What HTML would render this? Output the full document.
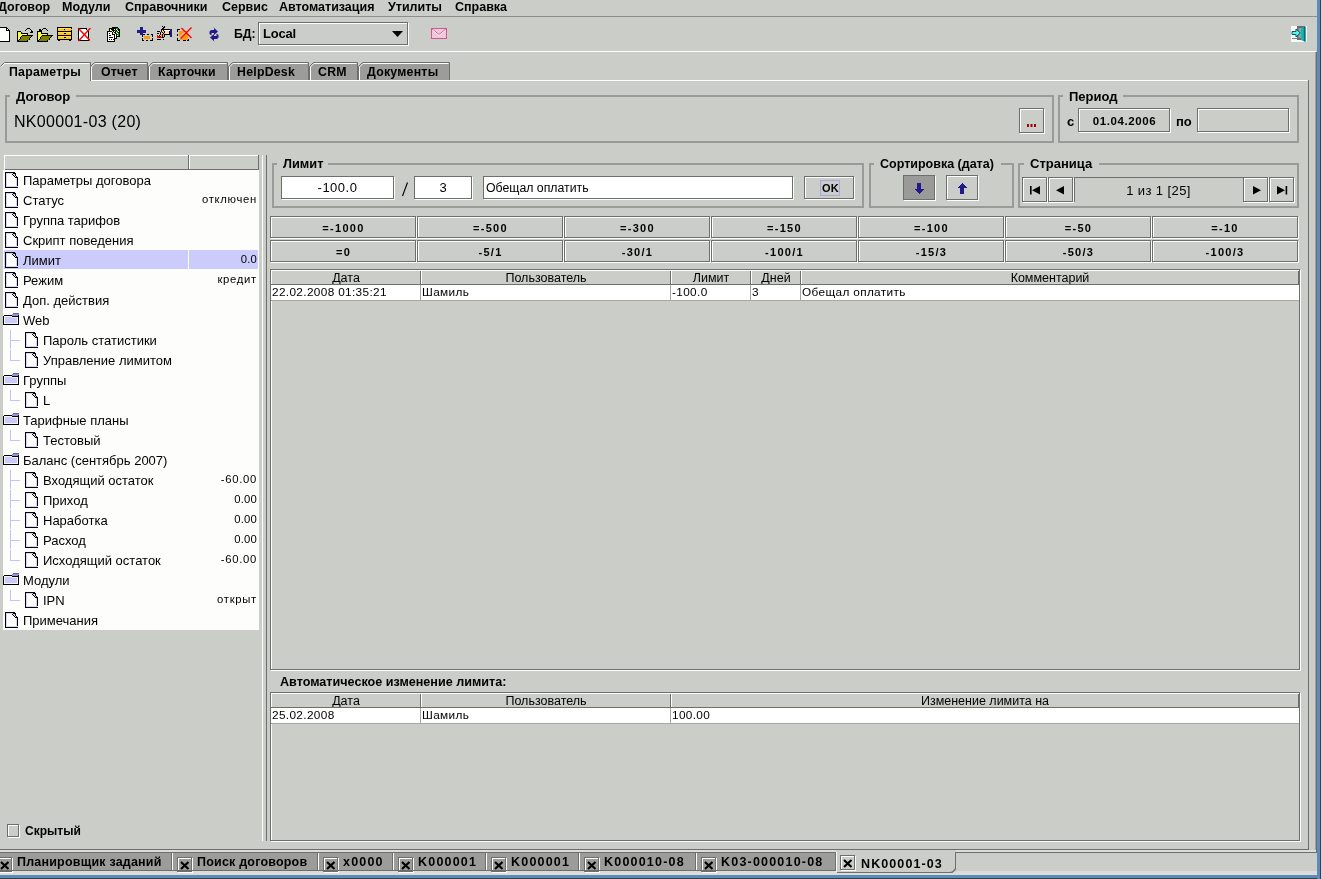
<!DOCTYPE html>
<html><head><meta charset="utf-8"><style>
html,body{margin:0;padding:0}
body{width:1321px;height:879px;overflow:hidden;position:relative;background:#cacdc8;font-family:"Liberation Sans",sans-serif}
#root{position:absolute;left:0;top:0;width:1321px;height:879px;overflow:hidden;will-change:transform}
#root>div,#root>svg{position:absolute}
.t{white-space:nowrap;line-height:20px}
</style></head><body><div id="root">
<div class="t" style="left:-2px;top:-3px;font-size:12.5px;font-weight:700;color:#000;">Договор</div>
<div class="t" style="left:62px;top:-3px;font-size:12.5px;font-weight:700;color:#000;">Модули</div>
<div class="t" style="left:125px;top:-3px;font-size:12.5px;font-weight:700;color:#000;">Справочники</div>
<div class="t" style="left:222px;top:-3px;font-size:12.5px;font-weight:700;color:#000;">Сервис</div>
<div class="t" style="left:279px;top:-3px;font-size:12.5px;font-weight:700;color:#000;">Автоматизация</div>
<div class="t" style="left:388px;top:-3px;font-size:12.5px;font-weight:700;color:#000;">Утилиты</div>
<div class="t" style="left:455px;top:-3px;font-size:12.5px;font-weight:700;color:#000;">Справка</div>
<div style="left:0px;top:16px;width:1317px;height:1px;background:#8e8f8c"></div>
<svg style="left:0px;top:27px" width="10" height="15" viewBox="0 0 10 15" shape-rendering="crispEdges"><rect x="0" y="0" width="7" height="1" fill="#000000"/><rect x="0" y="1" width="6" height="1" fill="#fdfdfb"/><rect x="6" y="1" width="2" height="1" fill="#000000"/><rect x="0" y="2" width="6" height="1" fill="#fdfdfb"/><rect x="6" y="2" width="1" height="1" fill="#000000"/><rect x="7" y="2" width="1" height="1" fill="#fdfdfb"/><rect x="8" y="2" width="1" height="1" fill="#000000"/><rect x="0" y="3" width="6" height="1" fill="#fdfdfb"/><rect x="6" y="3" width="4" height="1" fill="#000000"/><rect x="0" y="4" width="9" height="1" fill="#fdfdfb"/><rect x="9" y="4" width="1" height="1" fill="#000000"/><rect x="0" y="5" width="9" height="1" fill="#fdfdfb"/><rect x="9" y="5" width="1" height="1" fill="#000000"/><rect x="0" y="6" width="9" height="1" fill="#fdfdfb"/><rect x="9" y="6" width="1" height="1" fill="#000000"/><rect x="0" y="7" width="9" height="1" fill="#fdfdfb"/><rect x="9" y="7" width="1" height="1" fill="#000000"/><rect x="0" y="8" width="9" height="1" fill="#fdfdfb"/><rect x="9" y="8" width="1" height="1" fill="#000000"/><rect x="0" y="9" width="9" height="1" fill="#fdfdfb"/><rect x="9" y="9" width="1" height="1" fill="#000000"/><rect x="0" y="10" width="9" height="1" fill="#fdfdfb"/><rect x="9" y="10" width="1" height="1" fill="#000000"/><rect x="0" y="11" width="9" height="1" fill="#fdfdfb"/><rect x="9" y="11" width="1" height="1" fill="#000000"/><rect x="0" y="12" width="9" height="1" fill="#fdfdfb"/><rect x="9" y="12" width="1" height="1" fill="#000000"/><rect x="0" y="13" width="9" height="1" fill="#fdfdfb"/><rect x="9" y="13" width="1" height="1" fill="#000000"/><rect x="0" y="14" width="10" height="1" fill="#000000"/></svg>
<svg style="left:17px;top:28px" width="16" height="14" viewBox="0 0 16 14" shape-rendering="crispEdges"><rect x="10" y="0" width="3" height="1" fill="#000000"/><rect x="9" y="1" width="1" height="1" fill="#000000"/><rect x="13" y="1" width="1" height="1" fill="#000000"/><rect x="8" y="2" width="1" height="1" fill="#000000"/><rect x="14" y="2" width="1" height="1" fill="#000000"/><rect x="0" y="3" width="4" height="1" fill="#000000"/><rect x="14" y="3" width="2" height="1" fill="#000000"/><rect x="0" y="4" width="1" height="1" fill="#000000"/><rect x="1" y="4" width="3" height="1" fill="#ffff00"/><rect x="4" y="4" width="1" height="1" fill="#000000"/><rect x="13" y="4" width="3" height="1" fill="#000000"/><rect x="0" y="5" width="1" height="1" fill="#000000"/><rect x="1" y="5" width="1" height="1" fill="#ffff00"/><rect x="2" y="5" width="1" height="1" fill="#fdfdfb"/><rect x="3" y="5" width="1" height="1" fill="#ffff00"/><rect x="4" y="5" width="7" height="1" fill="#000000"/><rect x="0" y="6" width="1" height="1" fill="#000000"/><rect x="1" y="6" width="1" height="1" fill="#ffff00"/><rect x="2" y="6" width="1" height="1" fill="#fdfdfb"/><rect x="3" y="6" width="1" height="1" fill="#ffff00"/><rect x="4" y="6" width="1" height="1" fill="#fdfdfb"/><rect x="5" y="6" width="1" height="1" fill="#ffff00"/><rect x="6" y="6" width="1" height="1" fill="#fdfdfb"/><rect x="7" y="6" width="1" height="1" fill="#ffff00"/><rect x="8" y="6" width="1" height="1" fill="#fdfdfb"/><rect x="9" y="6" width="1" height="1" fill="#ffff00"/><rect x="10" y="6" width="1" height="1" fill="#000000"/><rect x="0" y="7" width="1" height="1" fill="#000000"/><rect x="1" y="7" width="2" height="1" fill="#ffff00"/><rect x="3" y="7" width="1" height="1" fill="#fdfdfb"/><rect x="4" y="7" width="1" height="1" fill="#ffff00"/><rect x="5" y="7" width="11" height="1" fill="#000000"/><rect x="0" y="8" width="1" height="1" fill="#000000"/><rect x="1" y="8" width="1" height="1" fill="#ffff00"/><rect x="2" y="8" width="1" height="1" fill="#fdfdfb"/><rect x="3" y="8" width="1" height="1" fill="#ffff00"/><rect x="4" y="8" width="1" height="1" fill="#000000"/><rect x="5" y="8" width="9" height="1" fill="#808000"/><rect x="14" y="8" width="1" height="1" fill="#000000"/><rect x="0" y="9" width="1" height="1" fill="#000000"/><rect x="1" y="9" width="2" height="1" fill="#ffff00"/><rect x="3" y="9" width="1" height="1" fill="#000000"/><rect x="4" y="9" width="9" height="1" fill="#808000"/><rect x="13" y="9" width="1" height="1" fill="#000000"/><rect x="0" y="10" width="1" height="1" fill="#000000"/><rect x="1" y="10" width="1" height="1" fill="#ffff00"/><rect x="2" y="10" width="1" height="1" fill="#fdfdfb"/><rect x="3" y="10" width="1" height="1" fill="#000000"/><rect x="4" y="10" width="8" height="1" fill="#808000"/><rect x="12" y="10" width="1" height="1" fill="#000000"/><rect x="0" y="11" width="1" height="1" fill="#000000"/><rect x="1" y="11" width="1" height="1" fill="#ffff00"/><rect x="2" y="11" width="1" height="1" fill="#000000"/><rect x="3" y="11" width="9" height="1" fill="#808000"/><rect x="12" y="11" width="1" height="1" fill="#000000"/><rect x="0" y="12" width="2" height="1" fill="#000000"/><rect x="2" y="12" width="8" height="1" fill="#808000"/><rect x="10" y="12" width="1" height="1" fill="#000000"/><rect x="0" y="13" width="11" height="1" fill="#000000"/></svg>
<svg style="left:37px;top:28px" width="16" height="14" viewBox="0 0 16 14" shape-rendering="crispEdges"><rect x="6" y="0" width="3" height="1" fill="#000000"/><rect x="2" y="1" width="2" height="1" fill="#000000"/><rect x="5" y="1" width="1" height="1" fill="#000000"/><rect x="9" y="1" width="1" height="1" fill="#000000"/><rect x="2" y="2" width="3" height="1" fill="#000000"/><rect x="10" y="2" width="1" height="1" fill="#000000"/><rect x="0" y="3" width="5" height="1" fill="#000000"/><rect x="0" y="4" width="1" height="1" fill="#000000"/><rect x="1" y="4" width="3" height="1" fill="#ffff00"/><rect x="4" y="4" width="1" height="1" fill="#000000"/><rect x="0" y="5" width="1" height="1" fill="#000000"/><rect x="1" y="5" width="1" height="1" fill="#ffff00"/><rect x="2" y="5" width="1" height="1" fill="#fdfdfb"/><rect x="3" y="5" width="1" height="1" fill="#ffff00"/><rect x="4" y="5" width="7" height="1" fill="#000000"/><rect x="0" y="6" width="1" height="1" fill="#000000"/><rect x="1" y="6" width="1" height="1" fill="#ffff00"/><rect x="2" y="6" width="1" height="1" fill="#fdfdfb"/><rect x="3" y="6" width="1" height="1" fill="#ffff00"/><rect x="4" y="6" width="1" height="1" fill="#fdfdfb"/><rect x="5" y="6" width="1" height="1" fill="#ffff00"/><rect x="6" y="6" width="1" height="1" fill="#fdfdfb"/><rect x="7" y="6" width="1" height="1" fill="#ffff00"/><rect x="8" y="6" width="1" height="1" fill="#fdfdfb"/><rect x="9" y="6" width="1" height="1" fill="#ffff00"/><rect x="10" y="6" width="1" height="1" fill="#000000"/><rect x="0" y="7" width="1" height="1" fill="#000000"/><rect x="1" y="7" width="2" height="1" fill="#ffff00"/><rect x="3" y="7" width="1" height="1" fill="#fdfdfb"/><rect x="4" y="7" width="1" height="1" fill="#ffff00"/><rect x="5" y="7" width="11" height="1" fill="#000000"/><rect x="0" y="8" width="1" height="1" fill="#000000"/><rect x="1" y="8" width="1" height="1" fill="#ffff00"/><rect x="2" y="8" width="1" height="1" fill="#fdfdfb"/><rect x="3" y="8" width="1" height="1" fill="#ffff00"/><rect x="4" y="8" width="1" height="1" fill="#000000"/><rect x="5" y="8" width="9" height="1" fill="#808000"/><rect x="14" y="8" width="1" height="1" fill="#000000"/><rect x="0" y="9" width="1" height="1" fill="#000000"/><rect x="1" y="9" width="2" height="1" fill="#ffff00"/><rect x="3" y="9" width="1" height="1" fill="#000000"/><rect x="4" y="9" width="9" height="1" fill="#808000"/><rect x="13" y="9" width="1" height="1" fill="#000000"/><rect x="0" y="10" width="1" height="1" fill="#000000"/><rect x="1" y="10" width="1" height="1" fill="#ffff00"/><rect x="2" y="10" width="1" height="1" fill="#fdfdfb"/><rect x="3" y="10" width="1" height="1" fill="#000000"/><rect x="4" y="10" width="8" height="1" fill="#808000"/><rect x="12" y="10" width="1" height="1" fill="#000000"/><rect x="0" y="11" width="1" height="1" fill="#000000"/><rect x="1" y="11" width="1" height="1" fill="#ffff00"/><rect x="2" y="11" width="1" height="1" fill="#000000"/><rect x="3" y="11" width="9" height="1" fill="#808000"/><rect x="12" y="11" width="1" height="1" fill="#000000"/><rect x="0" y="12" width="2" height="1" fill="#000000"/><rect x="2" y="12" width="8" height="1" fill="#808000"/><rect x="10" y="12" width="1" height="1" fill="#000000"/><rect x="0" y="13" width="11" height="1" fill="#000000"/></svg>
<svg style="left:57px;top:27px" width="15" height="14" viewBox="0 0 15 14" shape-rendering="crispEdges"><rect x="0" y="0" width="15" height="1" fill="#000000"/><rect x="0" y="1" width="1" height="1" fill="#000000"/><rect x="1" y="1" width="13" height="1" fill="#ffdd66"/><rect x="14" y="1" width="1" height="1" fill="#000000"/><rect x="0" y="2" width="1" height="1" fill="#000000"/><rect x="1" y="2" width="6" height="1" fill="#ffc31a"/><rect x="7" y="2" width="1" height="1" fill="#000000"/><rect x="8" y="2" width="7" height="1" fill="#ffc31a"/><rect x="0" y="3" width="1" height="1" fill="#000000"/><rect x="1" y="3" width="13" height="1" fill="#ffc31a"/><rect x="14" y="3" width="1" height="1" fill="#000000"/><rect x="0" y="4" width="15" height="1" fill="#000000"/><rect x="0" y="5" width="1" height="1" fill="#000000"/><rect x="1" y="5" width="13" height="1" fill="#ffdd66"/><rect x="14" y="5" width="1" height="1" fill="#000000"/><rect x="0" y="6" width="1" height="1" fill="#000000"/><rect x="1" y="6" width="6" height="1" fill="#ffc31a"/><rect x="7" y="6" width="2" height="1" fill="#000000"/><rect x="9" y="6" width="5" height="1" fill="#ffc31a"/><rect x="14" y="6" width="1" height="1" fill="#000000"/><rect x="0" y="7" width="1" height="1" fill="#000000"/><rect x="1" y="7" width="13" height="1" fill="#ffc31a"/><rect x="14" y="7" width="1" height="1" fill="#000000"/><rect x="0" y="8" width="15" height="1" fill="#000000"/><rect x="0" y="9" width="1" height="1" fill="#000000"/><rect x="1" y="9" width="13" height="1" fill="#ffdd66"/><rect x="14" y="9" width="1" height="1" fill="#000000"/><rect x="0" y="10" width="1" height="1" fill="#000000"/><rect x="1" y="10" width="6" height="1" fill="#ffc31a"/><rect x="7" y="10" width="2" height="1" fill="#000000"/><rect x="9" y="10" width="5" height="1" fill="#ffc31a"/><rect x="14" y="10" width="1" height="1" fill="#000000"/><rect x="0" y="11" width="1" height="1" fill="#000000"/><rect x="1" y="11" width="13" height="1" fill="#ffc31a"/><rect x="14" y="11" width="1" height="1" fill="#000000"/><rect x="0" y="12" width="15" height="1" fill="#000000"/><rect x="1" y="13" width="2" height="1" fill="#000000"/><rect x="12" y="13" width="2" height="1" fill="#000000"/></svg>
<svg style="left:78px;top:28px" width="13" height="14" viewBox="0 0 13 14" shape-rendering="crispEdges"><path d="M1 1 H8 L10 3 V12 H1 Z" fill="#fdfdfb"/><rect x="1" y="0" width="7" height="1" fill="#000000"/><rect x="0" y="0" width="1" height="13" fill="#000000"/><rect x="0" y="12" width="11" height="1" fill="#000000"/><rect x="10" y="3" width="1" height="10" fill="#000000"/><rect x="8" y="1" width="1" height="1" fill="#000000"/><rect x="9" y="2" width="1" height="1" fill="#000000"/><rect x="8" y="0" width="1" height="1" fill="#000000"/><path d="M0.5 0.5 L12 12.5 M12.5 0 L0.5 13" stroke="#ff0000" stroke-width="1.5" shape-rendering="auto"/></svg>
<svg style="left:107px;top:27px" width="15" height="15" viewBox="0 0 15 15" shape-rendering="crispEdges"><rect x="5" y="0" width="6" height="1" fill="#000000"/><rect x="2" y="1" width="7" height="1" fill="#000000"/><rect x="9" y="1" width="2" height="1" fill="#00a000"/><rect x="11" y="1" width="1" height="1" fill="#000000"/><rect x="2" y="2" width="1" height="1" fill="#000000"/><rect x="3" y="2" width="1" height="1" fill="#ffff00"/><rect x="4" y="2" width="3" height="1" fill="#000000"/><rect x="7" y="2" width="1" height="1" fill="#fdfdfb"/><rect x="8" y="2" width="1" height="1" fill="#000000"/><rect x="9" y="2" width="1" height="1" fill="#fdfdfb"/><rect x="10" y="2" width="1" height="1" fill="#00a000"/><rect x="11" y="2" width="2" height="1" fill="#000000"/><rect x="2" y="3" width="1" height="1" fill="#000000"/><rect x="3" y="3" width="1" height="1" fill="#fdfdfb"/><rect x="4" y="3" width="1" height="1" fill="#ffff00"/><rect x="5" y="3" width="3" height="1" fill="#000000"/><rect x="8" y="3" width="1" height="1" fill="#00a000"/><rect x="9" y="3" width="1" height="1" fill="#000000"/><rect x="10" y="3" width="1" height="1" fill="#fdfdfb"/><rect x="11" y="3" width="2" height="1" fill="#000000"/><rect x="0" y="4" width="5" height="1" fill="#000000"/><rect x="5" y="4" width="1" height="1" fill="#ffff00"/><rect x="6" y="4" width="1" height="1" fill="#000000"/><rect x="7" y="4" width="1" height="1" fill="#fdfdfb"/><rect x="8" y="4" width="1" height="1" fill="#000000"/><rect x="9" y="4" width="2" height="1" fill="#00a000"/><rect x="11" y="4" width="1" height="1" fill="#fdfdfb"/><rect x="12" y="4" width="1" height="1" fill="#000000"/><rect x="0" y="5" width="1" height="1" fill="#000000"/><rect x="1" y="5" width="4" height="1" fill="#fdfdfb"/><rect x="5" y="5" width="1" height="1" fill="#000000"/><rect x="6" y="5" width="1" height="1" fill="#ffff00"/><rect x="7" y="5" width="2" height="1" fill="#000000"/><rect x="9" y="5" width="1" height="1" fill="#fdfdfb"/><rect x="10" y="5" width="1" height="1" fill="#00a000"/><rect x="11" y="5" width="2" height="1" fill="#000000"/><rect x="0" y="6" width="1" height="1" fill="#000000"/><rect x="1" y="6" width="1" height="1" fill="#fdfdfb"/><rect x="2" y="6" width="1" height="1" fill="#000000"/><rect x="3" y="6" width="2" height="1" fill="#fdfdfb"/><rect x="5" y="6" width="1" height="1" fill="#000000"/><rect x="6" y="6" width="1" height="1" fill="#fdfdfb"/><rect x="7" y="6" width="1" height="1" fill="#ffff00"/><rect x="8" y="6" width="1" height="1" fill="#000000"/><rect x="9" y="6" width="1" height="1" fill="#00a000"/><rect x="10" y="6" width="1" height="1" fill="#fdfdfb"/><rect x="11" y="6" width="1" height="1" fill="#00a000"/><rect x="12" y="6" width="1" height="1" fill="#000000"/><rect x="0" y="7" width="1" height="1" fill="#000000"/><rect x="1" y="7" width="4" height="1" fill="#fdfdfb"/><rect x="5" y="7" width="3" height="1" fill="#000000"/><rect x="8" y="7" width="1" height="1" fill="#fdfdfb"/><rect x="9" y="7" width="1" height="1" fill="#000000"/><rect x="10" y="7" width="2" height="1" fill="#00a000"/><rect x="12" y="7" width="1" height="1" fill="#000000"/><rect x="0" y="8" width="1" height="1" fill="#000000"/><rect x="1" y="8" width="1" height="1" fill="#fdfdfb"/><rect x="2" y="8" width="2" height="1" fill="#000000"/><rect x="4" y="8" width="3" height="1" fill="#fdfdfb"/><rect x="7" y="8" width="1" height="1" fill="#000000"/><rect x="8" y="8" width="1" height="1" fill="#fdfdfb"/><rect x="9" y="8" width="1" height="1" fill="#000000"/><rect x="10" y="8" width="1" height="1" fill="#fdfdfb"/><rect x="11" y="8" width="1" height="1" fill="#00a000"/><rect x="12" y="8" width="1" height="1" fill="#000000"/><rect x="0" y="9" width="1" height="1" fill="#000000"/><rect x="1" y="9" width="6" height="1" fill="#fdfdfb"/><rect x="7" y="9" width="1" height="1" fill="#000000"/><rect x="8" y="9" width="1" height="1" fill="#fdfdfb"/><rect x="9" y="9" width="4" height="1" fill="#000000"/><rect x="0" y="10" width="1" height="1" fill="#000000"/><rect x="1" y="10" width="1" height="1" fill="#fdfdfb"/><rect x="2" y="10" width="4" height="1" fill="#000000"/><rect x="6" y="10" width="1" height="1" fill="#fdfdfb"/><rect x="7" y="10" width="1" height="1" fill="#000000"/><rect x="8" y="10" width="1" height="1" fill="#fdfdfb"/><rect x="9" y="10" width="1" height="1" fill="#000000"/><rect x="0" y="11" width="1" height="1" fill="#000000"/><rect x="1" y="11" width="6" height="1" fill="#fdfdfb"/><rect x="7" y="11" width="3" height="1" fill="#000000"/><rect x="0" y="12" width="1" height="1" fill="#000000"/><rect x="1" y="12" width="1" height="1" fill="#fdfdfb"/><rect x="2" y="12" width="1" height="1" fill="#000000"/><rect x="3" y="12" width="1" height="1" fill="#fdfdfb"/><rect x="4" y="12" width="1" height="1" fill="#000000"/><rect x="5" y="12" width="1" height="1" fill="#fdfdfb"/><rect x="6" y="12" width="2" height="1" fill="#000000"/><rect x="0" y="13" width="1" height="1" fill="#000000"/><rect x="1" y="13" width="6" height="1" fill="#fdfdfb"/><rect x="7" y="13" width="1" height="1" fill="#000000"/><rect x="0" y="14" width="8" height="1" fill="#000000"/></svg>
<svg style="left:137px;top:27px" width="16" height="14" viewBox="0 0 16 14" shape-rendering="crispEdges"><rect x="3" y="0" width="3" height="1" fill="#221a8a"/><rect x="3" y="1" width="3" height="1" fill="#221a8a"/><rect x="3" y="2" width="3" height="1" fill="#221a8a"/><rect x="0" y="3" width="9" height="1" fill="#221a8a"/><rect x="0" y="4" width="9" height="1" fill="#221a8a"/><rect x="0" y="5" width="9" height="1" fill="#221a8a"/><rect x="3" y="6" width="3" height="1" fill="#221a8a"/><rect x="3" y="7" width="3" height="1" fill="#221a8a"/><rect x="6" y="7" width="2" height="1" fill="#000000"/><rect x="10" y="7" width="2" height="1" fill="#000000"/><rect x="14" y="7" width="2" height="1" fill="#000000"/><rect x="5" y="8" width="1" height="1" fill="#000000"/><rect x="15" y="8" width="1" height="1" fill="#000000"/><rect x="5" y="9" width="1" height="1" fill="#000000"/><rect x="7" y="9" width="6" height="1" fill="#ff9911"/><rect x="15" y="9" width="1" height="1" fill="#000000"/><rect x="7" y="10" width="6" height="1" fill="#ff9911"/><rect x="5" y="11" width="1" height="1" fill="#000000"/><rect x="7" y="11" width="6" height="1" fill="#ff9911"/><rect x="15" y="11" width="1" height="1" fill="#000000"/><rect x="5" y="12" width="1" height="1" fill="#000000"/><rect x="15" y="12" width="1" height="1" fill="#000000"/><rect x="5" y="13" width="2" height="1" fill="#000000"/><rect x="9" y="13" width="2" height="1" fill="#000000"/><rect x="13" y="13" width="3" height="1" fill="#000000"/></svg>
<svg style="left:157px;top:26px" width="16" height="14" viewBox="0 0 16 14" shape-rendering="crispEdges"><rect x="5" y="0" width="1" height="1" fill="#000000"/><rect x="7" y="0" width="1" height="1" fill="#000000"/><rect x="6" y="1" width="2" height="1" fill="#000000"/><rect x="5" y="2" width="2" height="1" fill="#000000"/><rect x="4" y="3" width="9" height="1" fill="#000000"/><rect x="13" y="3" width="2" height="1" fill="#221a8a"/><rect x="4" y="4" width="1" height="1" fill="#000000"/><rect x="5" y="4" width="1" height="1" fill="#fdd9a8"/><rect x="6" y="4" width="1" height="1" fill="#000000"/><rect x="7" y="4" width="6" height="1" fill="#fdfdfb"/><rect x="13" y="4" width="2" height="1" fill="#221a8a"/><rect x="0" y="5" width="3" height="1" fill="#000000"/><rect x="4" y="5" width="1" height="1" fill="#000000"/><rect x="5" y="5" width="1" height="1" fill="#fdd9a8"/><rect x="6" y="5" width="1" height="1" fill="#e8a860"/><rect x="7" y="5" width="1" height="1" fill="#000000"/><rect x="8" y="5" width="4" height="1" fill="#fdd9a8"/><rect x="12" y="5" width="1" height="1" fill="#000000"/><rect x="13" y="5" width="2" height="1" fill="#221a8a"/><rect x="3" y="6" width="1" height="1" fill="#000000"/><rect x="4" y="6" width="1" height="1" fill="#e8a860"/><rect x="5" y="6" width="1" height="1" fill="#000000"/><rect x="6" y="6" width="1" height="1" fill="#e8a860"/><rect x="7" y="6" width="1" height="1" fill="#000000"/><rect x="8" y="6" width="4" height="1" fill="#fdd9a8"/><rect x="12" y="6" width="1" height="1" fill="#000000"/><rect x="13" y="6" width="2" height="1" fill="#221a8a"/><rect x="0" y="7" width="2" height="1" fill="#000000"/><rect x="3" y="7" width="1" height="1" fill="#000000"/><rect x="4" y="7" width="1" height="1" fill="#fdd9a8"/><rect x="5" y="7" width="1" height="1" fill="#e8a860"/><rect x="6" y="7" width="1" height="1" fill="#000000"/><rect x="7" y="7" width="1" height="1" fill="#e8a860"/><rect x="8" y="7" width="4" height="1" fill="#fdd9a8"/><rect x="12" y="7" width="1" height="1" fill="#000000"/><rect x="13" y="7" width="2" height="1" fill="#221a8a"/><rect x="3" y="8" width="1" height="1" fill="#000000"/><rect x="4" y="8" width="1" height="1" fill="#e8a860"/><rect x="5" y="8" width="1" height="1" fill="#000000"/><rect x="6" y="8" width="1" height="1" fill="#e8a860"/><rect x="7" y="8" width="6" height="1" fill="#000000"/><rect x="13" y="8" width="2" height="1" fill="#221a8a"/><rect x="0" y="9" width="1" height="1" fill="#ff0000"/><rect x="2" y="9" width="1" height="1" fill="#000000"/><rect x="3" y="9" width="1" height="1" fill="#fdd9a8"/><rect x="4" y="9" width="1" height="1" fill="#e8a860"/><rect x="5" y="9" width="1" height="1" fill="#000000"/><rect x="6" y="9" width="1" height="1" fill="#e8a860"/><rect x="7" y="9" width="1" height="1" fill="#000000"/><rect x="13" y="9" width="2" height="1" fill="#221a8a"/><rect x="0" y="10" width="3" height="1" fill="#ff0000"/><rect x="3" y="10" width="1" height="1" fill="#000000"/><rect x="4" y="10" width="1" height="1" fill="#e8a860"/><rect x="5" y="10" width="1" height="1" fill="#000000"/><rect x="6" y="10" width="1" height="1" fill="#e8a860"/><rect x="7" y="10" width="1" height="1" fill="#000000"/><rect x="13" y="10" width="2" height="1" fill="#221a8a"/><rect x="0" y="11" width="2" height="1" fill="#ff0000"/><rect x="2" y="11" width="1" height="1" fill="#000000"/><rect x="3" y="11" width="2" height="1" fill="#ff0000"/><rect x="5" y="11" width="2" height="1" fill="#000000"/><rect x="0" y="13" width="4" height="1" fill="#000000"/><rect x="6" y="13" width="1" height="1" fill="#000000"/></svg>
<svg style="left:177px;top:27px" width="16" height="15" viewBox="0 0 16 15" shape-rendering="crispEdges"><rect x="0" y="2" width="3" height="1" fill="#000000"/><rect x="0" y="2" width="1" height="3" fill="#000000"/><rect x="0" y="7" width="1" height="2" fill="#000000"/><rect x="0" y="11" width="1" height="3" fill="#000000"/><rect x="0" y="13" width="3" height="1" fill="#000000"/><rect x="6" y="13" width="3" height="1" fill="#000000"/><rect x="11" y="12" width="1" height="2" fill="#000000"/><rect x="10" y="13" width="2" height="1" fill="#000000"/><rect x="2" y="4" width="9" height="9" fill="#ff9911"/><path d="M2 12 L9 5" stroke="#c8d8d8" stroke-width="1.8" shape-rendering="auto"/><path d="M4.5 1 L14.5 11 M14.5 0.5 L3.5 11.5" stroke="#ff0000" stroke-width="1.4" shape-rendering="auto"/></svg>
<svg style="left:209px;top:27px" width="11" height="15" viewBox="0 0 11 15"><path d="M4 0 L9 4.5 L5 8 V6 H2.5 V8.5 L0.5 7 V4.5 L2 3 H5 V0.5 Z" fill="#221a8a"/><path d="M6 15 L1 10.5 L5 7 V9 H7.5 V6.5 L9.5 8 V10.5 L8 12 H5 V14.5 Z" fill="#221a8a"/></svg>
<svg style="left:431px;top:28px" width="16" height="11" viewBox="0 0 16 11"><rect x="0.5" y="0.5" width="15" height="10" fill="#f4c8dc" stroke="#d05890" stroke-width="1"/><path d="M1 1 L8 6.5 L15 1" fill="none" stroke="#d05890" stroke-width="1"/><path d="M1.5 2 L8 7.5 L14.5 2" fill="none" stroke="#fff" stroke-width="0.7"/></svg>
<svg style="left:1291px;top:26px" width="16" height="16" viewBox="0 0 16 16"><rect x="0" y="0" width="16" height="16" fill="#f8f8f8"/><path d="M6 0 H14 V14 H6 Z" fill="#6a6a6a"/><path d="M7.5 2 H10 V12 H7.5 Z" fill="#9c9c9c"/><path d="M10 2 L14.5 0.5 V16 L10 14 Z" fill="#14b8b8"/><path d="M12.8 1.2 L14.5 0.5 V16 L12.8 14.8 Z" fill="#0a6e6e"/><path d="M1 5.5 H5 V3 L9.3 7 L5 11 V8.5 H1 Z" fill="#50f6f6" stroke="#0a6060" stroke-width="1"/><rect x="1" y="12" width="6" height="1" fill="#808080"/></svg>
<div class="t" style="left:234px;top:24px;font-size:12.3px;font-weight:700;color:#000;">БД:</div>
<div style="left:259px;top:23px;width:150px;height:23px;border:1px solid #ffffff;box-sizing:border-box"></div>
<div style="left:258px;top:22px;width:150px;height:23px;border:1px solid #6e6f6c;box-sizing:border-box"></div>
<div class="t" style="left:263px;top:24px;font-size:13px;font-weight:700;color:#000;letter-spacing:-0.2px">Local</div>
<svg style="left:392px;top:31px" width="12" height="7"><path d="M0 0 H11 L5.5 6 Z" fill="#000"/></svg>
<div style="left:0px;top:51px;width:1316px;height:1px;background:#ffffff"></div>
<div style="left:1316px;top:52px;width:1px;height:801px;background:#6e6f6c"></div>
<div style="left:1315px;top:52px;width:1px;height:801px;background:#a0a19e"></div>
<svg style="left:0px;top:62px" width="91" height="19"><path d="M0 19 V4.5 L4.5 0.5 H90.5 V19" fill="#cacdc8" stroke="none"/><path d="M0.5 4.5 L4.5 0.5 H90.5 V19" fill="none" stroke="#6e6f6c" stroke-width="1"/><path d="M1.2 4.9 L4.9 1.5 H89.5" fill="none" stroke="#ffffff" stroke-width="1"/></svg>
<div class="t" style="left:9px;top:62px;font-size:12.3px;font-weight:700;color:#000;letter-spacing:0.25px">Параметры</div>
<svg style="left:90px;top:62px" width="58" height="18"><path d="M0.5 18 V4.5 L4.5 0.5 H57.5 V18" fill="#9c9d9a" stroke="#6e6f6c" stroke-width="1"/><path d="M1.5 18 V4.9 L4.9 1.5 H56.5" fill="none" stroke="#ffffff" stroke-width="1"/></svg>
<div class="t" style="left:101px;top:62px;font-size:12.3px;font-weight:700;color:#000;letter-spacing:0.25px">Отчет</div>
<svg style="left:148px;top:62px" width="80" height="18"><path d="M0.5 18 V4.5 L4.5 0.5 H79.5 V18" fill="#9c9d9a" stroke="#6e6f6c" stroke-width="1"/><path d="M1.5 18 V4.9 L4.9 1.5 H78.5" fill="none" stroke="#ffffff" stroke-width="1"/></svg>
<div class="t" style="left:158px;top:62px;font-size:12.3px;font-weight:700;color:#000;letter-spacing:0.25px">Карточки</div>
<svg style="left:228px;top:62px" width="81" height="18"><path d="M0.5 18 V4.5 L4.5 0.5 H80.5 V18" fill="#9c9d9a" stroke="#6e6f6c" stroke-width="1"/><path d="M1.5 18 V4.9 L4.9 1.5 H79.5" fill="none" stroke="#ffffff" stroke-width="1"/></svg>
<div class="t" style="left:237px;top:62px;font-size:12.3px;font-weight:700;color:#000;letter-spacing:0.25px">HelpDesk</div>
<svg style="left:309px;top:62px" width="49" height="18"><path d="M0.5 18 V4.5 L4.5 0.5 H48.5 V18" fill="#9c9d9a" stroke="#6e6f6c" stroke-width="1"/><path d="M1.5 18 V4.9 L4.9 1.5 H47.5" fill="none" stroke="#ffffff" stroke-width="1"/></svg>
<div class="t" style="left:318px;top:62px;font-size:12.3px;font-weight:700;color:#000;letter-spacing:0.25px">CRM</div>
<svg style="left:358px;top:62px" width="92" height="18"><path d="M0.5 18 V4.5 L4.5 0.5 H91.5 V18" fill="#9c9d9a" stroke="#6e6f6c" stroke-width="1"/><path d="M1.5 18 V4.9 L4.9 1.5 H90.5" fill="none" stroke="#ffffff" stroke-width="1"/></svg>
<div class="t" style="left:367px;top:62px;font-size:12.3px;font-weight:700;color:#000;letter-spacing:0.25px">Документы</div>
<div style="left:91px;top:80px;width:1218px;height:1px;background:#ffffff"></div>
<div style="left:1308px;top:80px;width:1px;height:770px;background:#6e6f6c"></div>
<div style="left:0px;top:849px;width:1309px;height:1px;background:#6e6f6c"></div>
<div style="left:5px;top:95px;width:1049px;height:48px;border:2px solid #9a9b98;box-sizing:border-box"></div>
<div style="left:10px;top:95px;width:66px;height:2px;background:#cacdc8"></div>
<div class="t" style="left:16px;top:87px;font-size:13px;font-weight:700;color:#000;">Договор</div>
<div class="t" style="left:14px;top:112px;font-size:16px;font-weight:400;color:#000;letter-spacing:0.3px">NK00001-03 (20)</div>
<div style="left:1020px;top:109px;width:25px;height:25px;border:1px solid #ffffff;box-sizing:border-box"></div>
<div style="left:1019px;top:108px;width:25px;height:25px;border:1px solid #6e6f6c;box-sizing:border-box"></div>
<svg style="left:1027px;top:124px" width="10" height="4"><rect x="0" y="0" width="2" height="3" fill="#a00000"/><rect x="3.5" y="0" width="2" height="3" fill="#a00000"/><rect x="7" y="0" width="2" height="3" fill="#a00000"/></svg>
<div style="left:1058px;top:95px;width:241px;height:48px;border:2px solid #9a9b98;box-sizing:border-box"></div>
<div style="left:1063px;top:95px;width:60px;height:2px;background:#cacdc8"></div>
<div class="t" style="left:1069px;top:87px;font-size:13px;font-weight:700;color:#000;">Период</div>
<div class="t" style="left:1067px;top:112px;font-size:13px;font-weight:700;color:#000;">с</div>
<div style="left:1079px;top:109px;width:92px;height:24px;border:1px solid #ffffff;box-sizing:border-box"></div>
<div style="left:1078px;top:108px;width:92px;height:24px;border:1px solid #6e6f6c;box-sizing:border-box"></div>
<div class="t" style="left:1078px;top:111px;width:93px;text-align:center;font-size:11.5px;font-weight:700;color:#000;letter-spacing:0.6px">01.04.2006</div>
<div class="t" style="left:1176px;top:112px;font-size:13px;font-weight:700;color:#000;">по</div>
<div style="left:1198px;top:109px;width:92px;height:24px;border:1px solid #ffffff;box-sizing:border-box"></div>
<div style="left:1197px;top:108px;width:92px;height:24px;border:1px solid #6e6f6c;box-sizing:border-box"></div>
<div style="left:3px;top:170px;width:256px;height:460px;background:#fdfdfb"></div>
<div style="left:4px;top:155px;width:255px;height:15px;background:#cacdc8"></div>
<div style="left:4px;top:155px;width:255px;height:1px;background:#ffffff"></div>
<div style="left:4px;top:169px;width:255px;height:1px;background:#6e6f6c"></div>
<div style="left:188px;top:155px;width:1px;height:15px;background:#6e6f6c"></div>
<div style="left:189px;top:156px;width:1px;height:13px;background:#ffffff"></div>
<div style="left:258px;top:155px;width:1px;height:15px;background:#6e6f6c"></div>
<div style="left:4px;top:155px;width:1px;height:15px;background:#ffffff"></div>
<svg style="left:5px;top:172px" width="13" height="16" viewBox="0 0 13 16" shape-rendering="crispEdges"><rect x="0" y="0" width="10" height="1" fill="#000"/><rect x="0" y="1" width="1" height="1" fill="#000"/><rect x="1" y="1" width="7" height="1" fill="#d4d4fc"/><rect x="8" y="1" width="3" height="1" fill="#000"/><rect x="0" y="2" width="1" height="1" fill="#000"/><rect x="1" y="2" width="1" height="1" fill="#d4d4fc"/><rect x="2" y="2" width="5" height="1" fill="#fdfdfb"/><rect x="7" y="2" width="1" height="1" fill="#000"/><rect x="8" y="2" width="2" height="1" fill="#d4d4fc"/><rect x="10" y="2" width="1" height="1" fill="#000"/><rect x="0" y="3" width="1" height="1" fill="#000"/><rect x="1" y="3" width="1" height="1" fill="#d4d4fc"/><rect x="2" y="3" width="6" height="1" fill="#fdfdfb"/><rect x="8" y="3" width="1" height="1" fill="#000"/><rect x="9" y="3" width="1" height="1" fill="#d4d4fc"/><rect x="10" y="3" width="1" height="1" fill="#000"/><rect x="0" y="4" width="1" height="1" fill="#000"/><rect x="1" y="4" width="1" height="1" fill="#d4d4fc"/><rect x="2" y="4" width="7" height="1" fill="#fdfdfb"/><rect x="9" y="4" width="1" height="1" fill="#000"/><rect x="10" y="4" width="1" height="1" fill="#d4d4fc"/><rect x="11" y="4" width="1" height="1" fill="#000"/><rect x="0" y="5" width="1" height="1" fill="#000"/><rect x="1" y="5" width="1" height="1" fill="#d4d4fc"/><rect x="2" y="5" width="8" height="1" fill="#fdfdfb"/><rect x="10" y="5" width="3" height="1" fill="#000"/><rect x="0" y="6" width="1" height="1" fill="#000"/><rect x="1" y="6" width="1" height="1" fill="#d4d4fc"/><rect x="2" y="6" width="9" height="1" fill="#fdfdfb"/><rect x="11" y="6" width="1" height="1" fill="#d4d4fc"/><rect x="12" y="6" width="1" height="1" fill="#000"/><rect x="0" y="7" width="1" height="1" fill="#000"/><rect x="1" y="7" width="1" height="1" fill="#d4d4fc"/><rect x="2" y="7" width="9" height="1" fill="#fdfdfb"/><rect x="11" y="7" width="1" height="1" fill="#d4d4fc"/><rect x="12" y="7" width="1" height="1" fill="#000"/><rect x="0" y="8" width="1" height="1" fill="#000"/><rect x="1" y="8" width="1" height="1" fill="#d4d4fc"/><rect x="2" y="8" width="9" height="1" fill="#fdfdfb"/><rect x="11" y="8" width="1" height="1" fill="#d4d4fc"/><rect x="12" y="8" width="1" height="1" fill="#000"/><rect x="0" y="9" width="1" height="1" fill="#000"/><rect x="1" y="9" width="1" height="1" fill="#d4d4fc"/><rect x="2" y="9" width="9" height="1" fill="#fdfdfb"/><rect x="11" y="9" width="1" height="1" fill="#d4d4fc"/><rect x="12" y="9" width="1" height="1" fill="#000"/><rect x="0" y="10" width="1" height="1" fill="#000"/><rect x="1" y="10" width="1" height="1" fill="#d4d4fc"/><rect x="2" y="10" width="9" height="1" fill="#fdfdfb"/><rect x="11" y="10" width="1" height="1" fill="#d4d4fc"/><rect x="12" y="10" width="1" height="1" fill="#000"/><rect x="0" y="11" width="1" height="1" fill="#000"/><rect x="1" y="11" width="1" height="1" fill="#d4d4fc"/><rect x="2" y="11" width="9" height="1" fill="#fdfdfb"/><rect x="11" y="11" width="1" height="1" fill="#d4d4fc"/><rect x="12" y="11" width="1" height="1" fill="#000"/><rect x="0" y="12" width="1" height="1" fill="#000"/><rect x="1" y="12" width="1" height="1" fill="#d4d4fc"/><rect x="2" y="12" width="9" height="1" fill="#fdfdfb"/><rect x="11" y="12" width="1" height="1" fill="#d4d4fc"/><rect x="12" y="12" width="1" height="1" fill="#000"/><rect x="0" y="13" width="1" height="1" fill="#000"/><rect x="1" y="13" width="1" height="1" fill="#d4d4fc"/><rect x="2" y="13" width="9" height="1" fill="#fdfdfb"/><rect x="11" y="13" width="1" height="1" fill="#d4d4fc"/><rect x="12" y="13" width="1" height="1" fill="#000"/><rect x="0" y="14" width="1" height="1" fill="#000"/><rect x="1" y="14" width="12" height="1" fill="#d4d4fc"/><rect x="0" y="15" width="13" height="1" fill="#000"/></svg>
<div class="t" style="left:23px;top:171px;font-size:13px;font-weight:400;color:#000;">Параметры договора</div>
<svg style="left:5px;top:192px" width="13" height="16" viewBox="0 0 13 16" shape-rendering="crispEdges"><rect x="0" y="0" width="10" height="1" fill="#000"/><rect x="0" y="1" width="1" height="1" fill="#000"/><rect x="1" y="1" width="7" height="1" fill="#d4d4fc"/><rect x="8" y="1" width="3" height="1" fill="#000"/><rect x="0" y="2" width="1" height="1" fill="#000"/><rect x="1" y="2" width="1" height="1" fill="#d4d4fc"/><rect x="2" y="2" width="5" height="1" fill="#fdfdfb"/><rect x="7" y="2" width="1" height="1" fill="#000"/><rect x="8" y="2" width="2" height="1" fill="#d4d4fc"/><rect x="10" y="2" width="1" height="1" fill="#000"/><rect x="0" y="3" width="1" height="1" fill="#000"/><rect x="1" y="3" width="1" height="1" fill="#d4d4fc"/><rect x="2" y="3" width="6" height="1" fill="#fdfdfb"/><rect x="8" y="3" width="1" height="1" fill="#000"/><rect x="9" y="3" width="1" height="1" fill="#d4d4fc"/><rect x="10" y="3" width="1" height="1" fill="#000"/><rect x="0" y="4" width="1" height="1" fill="#000"/><rect x="1" y="4" width="1" height="1" fill="#d4d4fc"/><rect x="2" y="4" width="7" height="1" fill="#fdfdfb"/><rect x="9" y="4" width="1" height="1" fill="#000"/><rect x="10" y="4" width="1" height="1" fill="#d4d4fc"/><rect x="11" y="4" width="1" height="1" fill="#000"/><rect x="0" y="5" width="1" height="1" fill="#000"/><rect x="1" y="5" width="1" height="1" fill="#d4d4fc"/><rect x="2" y="5" width="8" height="1" fill="#fdfdfb"/><rect x="10" y="5" width="3" height="1" fill="#000"/><rect x="0" y="6" width="1" height="1" fill="#000"/><rect x="1" y="6" width="1" height="1" fill="#d4d4fc"/><rect x="2" y="6" width="9" height="1" fill="#fdfdfb"/><rect x="11" y="6" width="1" height="1" fill="#d4d4fc"/><rect x="12" y="6" width="1" height="1" fill="#000"/><rect x="0" y="7" width="1" height="1" fill="#000"/><rect x="1" y="7" width="1" height="1" fill="#d4d4fc"/><rect x="2" y="7" width="9" height="1" fill="#fdfdfb"/><rect x="11" y="7" width="1" height="1" fill="#d4d4fc"/><rect x="12" y="7" width="1" height="1" fill="#000"/><rect x="0" y="8" width="1" height="1" fill="#000"/><rect x="1" y="8" width="1" height="1" fill="#d4d4fc"/><rect x="2" y="8" width="9" height="1" fill="#fdfdfb"/><rect x="11" y="8" width="1" height="1" fill="#d4d4fc"/><rect x="12" y="8" width="1" height="1" fill="#000"/><rect x="0" y="9" width="1" height="1" fill="#000"/><rect x="1" y="9" width="1" height="1" fill="#d4d4fc"/><rect x="2" y="9" width="9" height="1" fill="#fdfdfb"/><rect x="11" y="9" width="1" height="1" fill="#d4d4fc"/><rect x="12" y="9" width="1" height="1" fill="#000"/><rect x="0" y="10" width="1" height="1" fill="#000"/><rect x="1" y="10" width="1" height="1" fill="#d4d4fc"/><rect x="2" y="10" width="9" height="1" fill="#fdfdfb"/><rect x="11" y="10" width="1" height="1" fill="#d4d4fc"/><rect x="12" y="10" width="1" height="1" fill="#000"/><rect x="0" y="11" width="1" height="1" fill="#000"/><rect x="1" y="11" width="1" height="1" fill="#d4d4fc"/><rect x="2" y="11" width="9" height="1" fill="#fdfdfb"/><rect x="11" y="11" width="1" height="1" fill="#d4d4fc"/><rect x="12" y="11" width="1" height="1" fill="#000"/><rect x="0" y="12" width="1" height="1" fill="#000"/><rect x="1" y="12" width="1" height="1" fill="#d4d4fc"/><rect x="2" y="12" width="9" height="1" fill="#fdfdfb"/><rect x="11" y="12" width="1" height="1" fill="#d4d4fc"/><rect x="12" y="12" width="1" height="1" fill="#000"/><rect x="0" y="13" width="1" height="1" fill="#000"/><rect x="1" y="13" width="1" height="1" fill="#d4d4fc"/><rect x="2" y="13" width="9" height="1" fill="#fdfdfb"/><rect x="11" y="13" width="1" height="1" fill="#d4d4fc"/><rect x="12" y="13" width="1" height="1" fill="#000"/><rect x="0" y="14" width="1" height="1" fill="#000"/><rect x="1" y="14" width="12" height="1" fill="#d4d4fc"/><rect x="0" y="15" width="13" height="1" fill="#000"/></svg>
<div class="t" style="left:23px;top:191px;font-size:13px;font-weight:400;color:#000;">Статус</div>
<div class="t" style="left:150px;top:189px;width:107px;text-align:right;font-size:11.3px;font-weight:400;color:#000;letter-spacing:0.7px">отключен</div>
<svg style="left:5px;top:212px" width="13" height="16" viewBox="0 0 13 16" shape-rendering="crispEdges"><rect x="0" y="0" width="10" height="1" fill="#000"/><rect x="0" y="1" width="1" height="1" fill="#000"/><rect x="1" y="1" width="7" height="1" fill="#d4d4fc"/><rect x="8" y="1" width="3" height="1" fill="#000"/><rect x="0" y="2" width="1" height="1" fill="#000"/><rect x="1" y="2" width="1" height="1" fill="#d4d4fc"/><rect x="2" y="2" width="5" height="1" fill="#fdfdfb"/><rect x="7" y="2" width="1" height="1" fill="#000"/><rect x="8" y="2" width="2" height="1" fill="#d4d4fc"/><rect x="10" y="2" width="1" height="1" fill="#000"/><rect x="0" y="3" width="1" height="1" fill="#000"/><rect x="1" y="3" width="1" height="1" fill="#d4d4fc"/><rect x="2" y="3" width="6" height="1" fill="#fdfdfb"/><rect x="8" y="3" width="1" height="1" fill="#000"/><rect x="9" y="3" width="1" height="1" fill="#d4d4fc"/><rect x="10" y="3" width="1" height="1" fill="#000"/><rect x="0" y="4" width="1" height="1" fill="#000"/><rect x="1" y="4" width="1" height="1" fill="#d4d4fc"/><rect x="2" y="4" width="7" height="1" fill="#fdfdfb"/><rect x="9" y="4" width="1" height="1" fill="#000"/><rect x="10" y="4" width="1" height="1" fill="#d4d4fc"/><rect x="11" y="4" width="1" height="1" fill="#000"/><rect x="0" y="5" width="1" height="1" fill="#000"/><rect x="1" y="5" width="1" height="1" fill="#d4d4fc"/><rect x="2" y="5" width="8" height="1" fill="#fdfdfb"/><rect x="10" y="5" width="3" height="1" fill="#000"/><rect x="0" y="6" width="1" height="1" fill="#000"/><rect x="1" y="6" width="1" height="1" fill="#d4d4fc"/><rect x="2" y="6" width="9" height="1" fill="#fdfdfb"/><rect x="11" y="6" width="1" height="1" fill="#d4d4fc"/><rect x="12" y="6" width="1" height="1" fill="#000"/><rect x="0" y="7" width="1" height="1" fill="#000"/><rect x="1" y="7" width="1" height="1" fill="#d4d4fc"/><rect x="2" y="7" width="9" height="1" fill="#fdfdfb"/><rect x="11" y="7" width="1" height="1" fill="#d4d4fc"/><rect x="12" y="7" width="1" height="1" fill="#000"/><rect x="0" y="8" width="1" height="1" fill="#000"/><rect x="1" y="8" width="1" height="1" fill="#d4d4fc"/><rect x="2" y="8" width="9" height="1" fill="#fdfdfb"/><rect x="11" y="8" width="1" height="1" fill="#d4d4fc"/><rect x="12" y="8" width="1" height="1" fill="#000"/><rect x="0" y="9" width="1" height="1" fill="#000"/><rect x="1" y="9" width="1" height="1" fill="#d4d4fc"/><rect x="2" y="9" width="9" height="1" fill="#fdfdfb"/><rect x="11" y="9" width="1" height="1" fill="#d4d4fc"/><rect x="12" y="9" width="1" height="1" fill="#000"/><rect x="0" y="10" width="1" height="1" fill="#000"/><rect x="1" y="10" width="1" height="1" fill="#d4d4fc"/><rect x="2" y="10" width="9" height="1" fill="#fdfdfb"/><rect x="11" y="10" width="1" height="1" fill="#d4d4fc"/><rect x="12" y="10" width="1" height="1" fill="#000"/><rect x="0" y="11" width="1" height="1" fill="#000"/><rect x="1" y="11" width="1" height="1" fill="#d4d4fc"/><rect x="2" y="11" width="9" height="1" fill="#fdfdfb"/><rect x="11" y="11" width="1" height="1" fill="#d4d4fc"/><rect x="12" y="11" width="1" height="1" fill="#000"/><rect x="0" y="12" width="1" height="1" fill="#000"/><rect x="1" y="12" width="1" height="1" fill="#d4d4fc"/><rect x="2" y="12" width="9" height="1" fill="#fdfdfb"/><rect x="11" y="12" width="1" height="1" fill="#d4d4fc"/><rect x="12" y="12" width="1" height="1" fill="#000"/><rect x="0" y="13" width="1" height="1" fill="#000"/><rect x="1" y="13" width="1" height="1" fill="#d4d4fc"/><rect x="2" y="13" width="9" height="1" fill="#fdfdfb"/><rect x="11" y="13" width="1" height="1" fill="#d4d4fc"/><rect x="12" y="13" width="1" height="1" fill="#000"/><rect x="0" y="14" width="1" height="1" fill="#000"/><rect x="1" y="14" width="12" height="1" fill="#d4d4fc"/><rect x="0" y="15" width="13" height="1" fill="#000"/></svg>
<div class="t" style="left:23px;top:211px;font-size:13px;font-weight:400;color:#000;">Группа тарифов</div>
<svg style="left:5px;top:232px" width="13" height="16" viewBox="0 0 13 16" shape-rendering="crispEdges"><rect x="0" y="0" width="10" height="1" fill="#000"/><rect x="0" y="1" width="1" height="1" fill="#000"/><rect x="1" y="1" width="7" height="1" fill="#d4d4fc"/><rect x="8" y="1" width="3" height="1" fill="#000"/><rect x="0" y="2" width="1" height="1" fill="#000"/><rect x="1" y="2" width="1" height="1" fill="#d4d4fc"/><rect x="2" y="2" width="5" height="1" fill="#fdfdfb"/><rect x="7" y="2" width="1" height="1" fill="#000"/><rect x="8" y="2" width="2" height="1" fill="#d4d4fc"/><rect x="10" y="2" width="1" height="1" fill="#000"/><rect x="0" y="3" width="1" height="1" fill="#000"/><rect x="1" y="3" width="1" height="1" fill="#d4d4fc"/><rect x="2" y="3" width="6" height="1" fill="#fdfdfb"/><rect x="8" y="3" width="1" height="1" fill="#000"/><rect x="9" y="3" width="1" height="1" fill="#d4d4fc"/><rect x="10" y="3" width="1" height="1" fill="#000"/><rect x="0" y="4" width="1" height="1" fill="#000"/><rect x="1" y="4" width="1" height="1" fill="#d4d4fc"/><rect x="2" y="4" width="7" height="1" fill="#fdfdfb"/><rect x="9" y="4" width="1" height="1" fill="#000"/><rect x="10" y="4" width="1" height="1" fill="#d4d4fc"/><rect x="11" y="4" width="1" height="1" fill="#000"/><rect x="0" y="5" width="1" height="1" fill="#000"/><rect x="1" y="5" width="1" height="1" fill="#d4d4fc"/><rect x="2" y="5" width="8" height="1" fill="#fdfdfb"/><rect x="10" y="5" width="3" height="1" fill="#000"/><rect x="0" y="6" width="1" height="1" fill="#000"/><rect x="1" y="6" width="1" height="1" fill="#d4d4fc"/><rect x="2" y="6" width="9" height="1" fill="#fdfdfb"/><rect x="11" y="6" width="1" height="1" fill="#d4d4fc"/><rect x="12" y="6" width="1" height="1" fill="#000"/><rect x="0" y="7" width="1" height="1" fill="#000"/><rect x="1" y="7" width="1" height="1" fill="#d4d4fc"/><rect x="2" y="7" width="9" height="1" fill="#fdfdfb"/><rect x="11" y="7" width="1" height="1" fill="#d4d4fc"/><rect x="12" y="7" width="1" height="1" fill="#000"/><rect x="0" y="8" width="1" height="1" fill="#000"/><rect x="1" y="8" width="1" height="1" fill="#d4d4fc"/><rect x="2" y="8" width="9" height="1" fill="#fdfdfb"/><rect x="11" y="8" width="1" height="1" fill="#d4d4fc"/><rect x="12" y="8" width="1" height="1" fill="#000"/><rect x="0" y="9" width="1" height="1" fill="#000"/><rect x="1" y="9" width="1" height="1" fill="#d4d4fc"/><rect x="2" y="9" width="9" height="1" fill="#fdfdfb"/><rect x="11" y="9" width="1" height="1" fill="#d4d4fc"/><rect x="12" y="9" width="1" height="1" fill="#000"/><rect x="0" y="10" width="1" height="1" fill="#000"/><rect x="1" y="10" width="1" height="1" fill="#d4d4fc"/><rect x="2" y="10" width="9" height="1" fill="#fdfdfb"/><rect x="11" y="10" width="1" height="1" fill="#d4d4fc"/><rect x="12" y="10" width="1" height="1" fill="#000"/><rect x="0" y="11" width="1" height="1" fill="#000"/><rect x="1" y="11" width="1" height="1" fill="#d4d4fc"/><rect x="2" y="11" width="9" height="1" fill="#fdfdfb"/><rect x="11" y="11" width="1" height="1" fill="#d4d4fc"/><rect x="12" y="11" width="1" height="1" fill="#000"/><rect x="0" y="12" width="1" height="1" fill="#000"/><rect x="1" y="12" width="1" height="1" fill="#d4d4fc"/><rect x="2" y="12" width="9" height="1" fill="#fdfdfb"/><rect x="11" y="12" width="1" height="1" fill="#d4d4fc"/><rect x="12" y="12" width="1" height="1" fill="#000"/><rect x="0" y="13" width="1" height="1" fill="#000"/><rect x="1" y="13" width="1" height="1" fill="#d4d4fc"/><rect x="2" y="13" width="9" height="1" fill="#fdfdfb"/><rect x="11" y="13" width="1" height="1" fill="#d4d4fc"/><rect x="12" y="13" width="1" height="1" fill="#000"/><rect x="0" y="14" width="1" height="1" fill="#000"/><rect x="1" y="14" width="12" height="1" fill="#d4d4fc"/><rect x="0" y="15" width="13" height="1" fill="#000"/></svg>
<div class="t" style="left:23px;top:231px;font-size:13px;font-weight:400;color:#000;">Скрипт поведения</div>
<div style="left:4px;top:250px;width:184px;height:19px;background:#ccccfc"></div>
<div style="left:189px;top:250px;width:69px;height:19px;background:#ccccfc"></div>
<svg style="left:5px;top:252px" width="13" height="16" viewBox="0 0 13 16" shape-rendering="crispEdges"><rect x="0" y="0" width="10" height="1" fill="#000"/><rect x="0" y="1" width="1" height="1" fill="#000"/><rect x="1" y="1" width="7" height="1" fill="#d4d4fc"/><rect x="8" y="1" width="3" height="1" fill="#000"/><rect x="0" y="2" width="1" height="1" fill="#000"/><rect x="1" y="2" width="1" height="1" fill="#d4d4fc"/><rect x="2" y="2" width="5" height="1" fill="#fdfdfb"/><rect x="7" y="2" width="1" height="1" fill="#000"/><rect x="8" y="2" width="2" height="1" fill="#d4d4fc"/><rect x="10" y="2" width="1" height="1" fill="#000"/><rect x="0" y="3" width="1" height="1" fill="#000"/><rect x="1" y="3" width="1" height="1" fill="#d4d4fc"/><rect x="2" y="3" width="6" height="1" fill="#fdfdfb"/><rect x="8" y="3" width="1" height="1" fill="#000"/><rect x="9" y="3" width="1" height="1" fill="#d4d4fc"/><rect x="10" y="3" width="1" height="1" fill="#000"/><rect x="0" y="4" width="1" height="1" fill="#000"/><rect x="1" y="4" width="1" height="1" fill="#d4d4fc"/><rect x="2" y="4" width="7" height="1" fill="#fdfdfb"/><rect x="9" y="4" width="1" height="1" fill="#000"/><rect x="10" y="4" width="1" height="1" fill="#d4d4fc"/><rect x="11" y="4" width="1" height="1" fill="#000"/><rect x="0" y="5" width="1" height="1" fill="#000"/><rect x="1" y="5" width="1" height="1" fill="#d4d4fc"/><rect x="2" y="5" width="8" height="1" fill="#fdfdfb"/><rect x="10" y="5" width="3" height="1" fill="#000"/><rect x="0" y="6" width="1" height="1" fill="#000"/><rect x="1" y="6" width="1" height="1" fill="#d4d4fc"/><rect x="2" y="6" width="9" height="1" fill="#fdfdfb"/><rect x="11" y="6" width="1" height="1" fill="#d4d4fc"/><rect x="12" y="6" width="1" height="1" fill="#000"/><rect x="0" y="7" width="1" height="1" fill="#000"/><rect x="1" y="7" width="1" height="1" fill="#d4d4fc"/><rect x="2" y="7" width="9" height="1" fill="#fdfdfb"/><rect x="11" y="7" width="1" height="1" fill="#d4d4fc"/><rect x="12" y="7" width="1" height="1" fill="#000"/><rect x="0" y="8" width="1" height="1" fill="#000"/><rect x="1" y="8" width="1" height="1" fill="#d4d4fc"/><rect x="2" y="8" width="9" height="1" fill="#fdfdfb"/><rect x="11" y="8" width="1" height="1" fill="#d4d4fc"/><rect x="12" y="8" width="1" height="1" fill="#000"/><rect x="0" y="9" width="1" height="1" fill="#000"/><rect x="1" y="9" width="1" height="1" fill="#d4d4fc"/><rect x="2" y="9" width="9" height="1" fill="#fdfdfb"/><rect x="11" y="9" width="1" height="1" fill="#d4d4fc"/><rect x="12" y="9" width="1" height="1" fill="#000"/><rect x="0" y="10" width="1" height="1" fill="#000"/><rect x="1" y="10" width="1" height="1" fill="#d4d4fc"/><rect x="2" y="10" width="9" height="1" fill="#fdfdfb"/><rect x="11" y="10" width="1" height="1" fill="#d4d4fc"/><rect x="12" y="10" width="1" height="1" fill="#000"/><rect x="0" y="11" width="1" height="1" fill="#000"/><rect x="1" y="11" width="1" height="1" fill="#d4d4fc"/><rect x="2" y="11" width="9" height="1" fill="#fdfdfb"/><rect x="11" y="11" width="1" height="1" fill="#d4d4fc"/><rect x="12" y="11" width="1" height="1" fill="#000"/><rect x="0" y="12" width="1" height="1" fill="#000"/><rect x="1" y="12" width="1" height="1" fill="#d4d4fc"/><rect x="2" y="12" width="9" height="1" fill="#fdfdfb"/><rect x="11" y="12" width="1" height="1" fill="#d4d4fc"/><rect x="12" y="12" width="1" height="1" fill="#000"/><rect x="0" y="13" width="1" height="1" fill="#000"/><rect x="1" y="13" width="1" height="1" fill="#d4d4fc"/><rect x="2" y="13" width="9" height="1" fill="#fdfdfb"/><rect x="11" y="13" width="1" height="1" fill="#d4d4fc"/><rect x="12" y="13" width="1" height="1" fill="#000"/><rect x="0" y="14" width="1" height="1" fill="#000"/><rect x="1" y="14" width="12" height="1" fill="#d4d4fc"/><rect x="0" y="15" width="13" height="1" fill="#000"/></svg>
<div class="t" style="left:23px;top:251px;font-size:13px;font-weight:400;color:#000;">Лимит</div>
<div class="t" style="left:150px;top:249px;width:107px;text-align:right;font-size:11.3px;font-weight:400;color:#000;letter-spacing:0.2px">0.0</div>
<svg style="left:5px;top:272px" width="13" height="16" viewBox="0 0 13 16" shape-rendering="crispEdges"><rect x="0" y="0" width="10" height="1" fill="#000"/><rect x="0" y="1" width="1" height="1" fill="#000"/><rect x="1" y="1" width="7" height="1" fill="#d4d4fc"/><rect x="8" y="1" width="3" height="1" fill="#000"/><rect x="0" y="2" width="1" height="1" fill="#000"/><rect x="1" y="2" width="1" height="1" fill="#d4d4fc"/><rect x="2" y="2" width="5" height="1" fill="#fdfdfb"/><rect x="7" y="2" width="1" height="1" fill="#000"/><rect x="8" y="2" width="2" height="1" fill="#d4d4fc"/><rect x="10" y="2" width="1" height="1" fill="#000"/><rect x="0" y="3" width="1" height="1" fill="#000"/><rect x="1" y="3" width="1" height="1" fill="#d4d4fc"/><rect x="2" y="3" width="6" height="1" fill="#fdfdfb"/><rect x="8" y="3" width="1" height="1" fill="#000"/><rect x="9" y="3" width="1" height="1" fill="#d4d4fc"/><rect x="10" y="3" width="1" height="1" fill="#000"/><rect x="0" y="4" width="1" height="1" fill="#000"/><rect x="1" y="4" width="1" height="1" fill="#d4d4fc"/><rect x="2" y="4" width="7" height="1" fill="#fdfdfb"/><rect x="9" y="4" width="1" height="1" fill="#000"/><rect x="10" y="4" width="1" height="1" fill="#d4d4fc"/><rect x="11" y="4" width="1" height="1" fill="#000"/><rect x="0" y="5" width="1" height="1" fill="#000"/><rect x="1" y="5" width="1" height="1" fill="#d4d4fc"/><rect x="2" y="5" width="8" height="1" fill="#fdfdfb"/><rect x="10" y="5" width="3" height="1" fill="#000"/><rect x="0" y="6" width="1" height="1" fill="#000"/><rect x="1" y="6" width="1" height="1" fill="#d4d4fc"/><rect x="2" y="6" width="9" height="1" fill="#fdfdfb"/><rect x="11" y="6" width="1" height="1" fill="#d4d4fc"/><rect x="12" y="6" width="1" height="1" fill="#000"/><rect x="0" y="7" width="1" height="1" fill="#000"/><rect x="1" y="7" width="1" height="1" fill="#d4d4fc"/><rect x="2" y="7" width="9" height="1" fill="#fdfdfb"/><rect x="11" y="7" width="1" height="1" fill="#d4d4fc"/><rect x="12" y="7" width="1" height="1" fill="#000"/><rect x="0" y="8" width="1" height="1" fill="#000"/><rect x="1" y="8" width="1" height="1" fill="#d4d4fc"/><rect x="2" y="8" width="9" height="1" fill="#fdfdfb"/><rect x="11" y="8" width="1" height="1" fill="#d4d4fc"/><rect x="12" y="8" width="1" height="1" fill="#000"/><rect x="0" y="9" width="1" height="1" fill="#000"/><rect x="1" y="9" width="1" height="1" fill="#d4d4fc"/><rect x="2" y="9" width="9" height="1" fill="#fdfdfb"/><rect x="11" y="9" width="1" height="1" fill="#d4d4fc"/><rect x="12" y="9" width="1" height="1" fill="#000"/><rect x="0" y="10" width="1" height="1" fill="#000"/><rect x="1" y="10" width="1" height="1" fill="#d4d4fc"/><rect x="2" y="10" width="9" height="1" fill="#fdfdfb"/><rect x="11" y="10" width="1" height="1" fill="#d4d4fc"/><rect x="12" y="10" width="1" height="1" fill="#000"/><rect x="0" y="11" width="1" height="1" fill="#000"/><rect x="1" y="11" width="1" height="1" fill="#d4d4fc"/><rect x="2" y="11" width="9" height="1" fill="#fdfdfb"/><rect x="11" y="11" width="1" height="1" fill="#d4d4fc"/><rect x="12" y="11" width="1" height="1" fill="#000"/><rect x="0" y="12" width="1" height="1" fill="#000"/><rect x="1" y="12" width="1" height="1" fill="#d4d4fc"/><rect x="2" y="12" width="9" height="1" fill="#fdfdfb"/><rect x="11" y="12" width="1" height="1" fill="#d4d4fc"/><rect x="12" y="12" width="1" height="1" fill="#000"/><rect x="0" y="13" width="1" height="1" fill="#000"/><rect x="1" y="13" width="1" height="1" fill="#d4d4fc"/><rect x="2" y="13" width="9" height="1" fill="#fdfdfb"/><rect x="11" y="13" width="1" height="1" fill="#d4d4fc"/><rect x="12" y="13" width="1" height="1" fill="#000"/><rect x="0" y="14" width="1" height="1" fill="#000"/><rect x="1" y="14" width="12" height="1" fill="#d4d4fc"/><rect x="0" y="15" width="13" height="1" fill="#000"/></svg>
<div class="t" style="left:23px;top:271px;font-size:13px;font-weight:400;color:#000;">Режим</div>
<div class="t" style="left:150px;top:269px;width:107px;text-align:right;font-size:11.3px;font-weight:400;color:#000;letter-spacing:0.7px">кредит</div>
<svg style="left:5px;top:292px" width="13" height="16" viewBox="0 0 13 16" shape-rendering="crispEdges"><rect x="0" y="0" width="10" height="1" fill="#000"/><rect x="0" y="1" width="1" height="1" fill="#000"/><rect x="1" y="1" width="7" height="1" fill="#d4d4fc"/><rect x="8" y="1" width="3" height="1" fill="#000"/><rect x="0" y="2" width="1" height="1" fill="#000"/><rect x="1" y="2" width="1" height="1" fill="#d4d4fc"/><rect x="2" y="2" width="5" height="1" fill="#fdfdfb"/><rect x="7" y="2" width="1" height="1" fill="#000"/><rect x="8" y="2" width="2" height="1" fill="#d4d4fc"/><rect x="10" y="2" width="1" height="1" fill="#000"/><rect x="0" y="3" width="1" height="1" fill="#000"/><rect x="1" y="3" width="1" height="1" fill="#d4d4fc"/><rect x="2" y="3" width="6" height="1" fill="#fdfdfb"/><rect x="8" y="3" width="1" height="1" fill="#000"/><rect x="9" y="3" width="1" height="1" fill="#d4d4fc"/><rect x="10" y="3" width="1" height="1" fill="#000"/><rect x="0" y="4" width="1" height="1" fill="#000"/><rect x="1" y="4" width="1" height="1" fill="#d4d4fc"/><rect x="2" y="4" width="7" height="1" fill="#fdfdfb"/><rect x="9" y="4" width="1" height="1" fill="#000"/><rect x="10" y="4" width="1" height="1" fill="#d4d4fc"/><rect x="11" y="4" width="1" height="1" fill="#000"/><rect x="0" y="5" width="1" height="1" fill="#000"/><rect x="1" y="5" width="1" height="1" fill="#d4d4fc"/><rect x="2" y="5" width="8" height="1" fill="#fdfdfb"/><rect x="10" y="5" width="3" height="1" fill="#000"/><rect x="0" y="6" width="1" height="1" fill="#000"/><rect x="1" y="6" width="1" height="1" fill="#d4d4fc"/><rect x="2" y="6" width="9" height="1" fill="#fdfdfb"/><rect x="11" y="6" width="1" height="1" fill="#d4d4fc"/><rect x="12" y="6" width="1" height="1" fill="#000"/><rect x="0" y="7" width="1" height="1" fill="#000"/><rect x="1" y="7" width="1" height="1" fill="#d4d4fc"/><rect x="2" y="7" width="9" height="1" fill="#fdfdfb"/><rect x="11" y="7" width="1" height="1" fill="#d4d4fc"/><rect x="12" y="7" width="1" height="1" fill="#000"/><rect x="0" y="8" width="1" height="1" fill="#000"/><rect x="1" y="8" width="1" height="1" fill="#d4d4fc"/><rect x="2" y="8" width="9" height="1" fill="#fdfdfb"/><rect x="11" y="8" width="1" height="1" fill="#d4d4fc"/><rect x="12" y="8" width="1" height="1" fill="#000"/><rect x="0" y="9" width="1" height="1" fill="#000"/><rect x="1" y="9" width="1" height="1" fill="#d4d4fc"/><rect x="2" y="9" width="9" height="1" fill="#fdfdfb"/><rect x="11" y="9" width="1" height="1" fill="#d4d4fc"/><rect x="12" y="9" width="1" height="1" fill="#000"/><rect x="0" y="10" width="1" height="1" fill="#000"/><rect x="1" y="10" width="1" height="1" fill="#d4d4fc"/><rect x="2" y="10" width="9" height="1" fill="#fdfdfb"/><rect x="11" y="10" width="1" height="1" fill="#d4d4fc"/><rect x="12" y="10" width="1" height="1" fill="#000"/><rect x="0" y="11" width="1" height="1" fill="#000"/><rect x="1" y="11" width="1" height="1" fill="#d4d4fc"/><rect x="2" y="11" width="9" height="1" fill="#fdfdfb"/><rect x="11" y="11" width="1" height="1" fill="#d4d4fc"/><rect x="12" y="11" width="1" height="1" fill="#000"/><rect x="0" y="12" width="1" height="1" fill="#000"/><rect x="1" y="12" width="1" height="1" fill="#d4d4fc"/><rect x="2" y="12" width="9" height="1" fill="#fdfdfb"/><rect x="11" y="12" width="1" height="1" fill="#d4d4fc"/><rect x="12" y="12" width="1" height="1" fill="#000"/><rect x="0" y="13" width="1" height="1" fill="#000"/><rect x="1" y="13" width="1" height="1" fill="#d4d4fc"/><rect x="2" y="13" width="9" height="1" fill="#fdfdfb"/><rect x="11" y="13" width="1" height="1" fill="#d4d4fc"/><rect x="12" y="13" width="1" height="1" fill="#000"/><rect x="0" y="14" width="1" height="1" fill="#000"/><rect x="1" y="14" width="12" height="1" fill="#d4d4fc"/><rect x="0" y="15" width="13" height="1" fill="#000"/></svg>
<div class="t" style="left:23px;top:291px;font-size:13px;font-weight:400;color:#000;">Доп. действия</div>
<svg style="left:3px;top:313px" width="16" height="12" viewBox="0 0 16 12" shape-rendering="crispEdges"><rect x="10" y="0" width="6" height="1" fill="#6464a4"/><rect x="9" y="1" width="7" height="1" fill="#9494d4"/><rect x="1" y="2" width="8" height="1" fill="#000"/><rect x="9" y="2" width="6" height="1" fill="#9494d4"/><rect x="15" y="2" width="1" height="1" fill="#000"/><rect x="0" y="3" width="1" height="1" fill="#000"/><rect x="1" y="3" width="8" height="1" fill="#f4f4ff"/><rect x="9" y="3" width="7" height="1" fill="#000"/><rect x="0" y="4" width="1" height="1" fill="#000"/><rect x="1" y="4" width="1" height="1" fill="#f4f4ff"/><rect x="2" y="4" width="7" height="1" fill="#ccccfc"/><rect x="9" y="4" width="6" height="1" fill="#f4f4ff"/><rect x="15" y="4" width="1" height="1" fill="#000"/><rect x="0" y="5" width="1" height="1" fill="#000"/><rect x="1" y="5" width="1" height="1" fill="#f4f4ff"/><rect x="2" y="5" width="12" height="1" fill="#ccccfc"/><rect x="14" y="5" width="1" height="1" fill="#f4f4ff"/><rect x="15" y="5" width="1" height="1" fill="#000"/><rect x="0" y="6" width="1" height="1" fill="#000"/><rect x="1" y="6" width="1" height="1" fill="#f4f4ff"/><rect x="2" y="6" width="12" height="1" fill="#ccccfc"/><rect x="14" y="6" width="1" height="1" fill="#f4f4ff"/><rect x="15" y="6" width="1" height="1" fill="#000"/><rect x="0" y="7" width="1" height="1" fill="#000"/><rect x="1" y="7" width="1" height="1" fill="#f4f4ff"/><rect x="2" y="7" width="12" height="1" fill="#ccccfc"/><rect x="14" y="7" width="1" height="1" fill="#f4f4ff"/><rect x="15" y="7" width="1" height="1" fill="#000"/><rect x="0" y="8" width="1" height="1" fill="#000"/><rect x="1" y="8" width="1" height="1" fill="#f4f4ff"/><rect x="2" y="8" width="12" height="1" fill="#ccccfc"/><rect x="14" y="8" width="1" height="1" fill="#f4f4ff"/><rect x="15" y="8" width="1" height="1" fill="#000"/><rect x="0" y="9" width="1" height="1" fill="#000"/><rect x="1" y="9" width="1" height="1" fill="#f4f4ff"/><rect x="2" y="9" width="12" height="1" fill="#ccccfc"/><rect x="14" y="9" width="1" height="1" fill="#f4f4ff"/><rect x="15" y="9" width="1" height="1" fill="#000"/><rect x="0" y="10" width="1" height="1" fill="#000"/><rect x="1" y="10" width="14" height="1" fill="#f4f4ff"/><rect x="15" y="10" width="1" height="1" fill="#000"/><rect x="0" y="11" width="16" height="1" fill="#000"/></svg>
<div class="t" style="left:23px;top:311px;font-size:13px;font-weight:400;color:#000;">Web</div>
<svg style="left:25px;top:332px" width="13" height="16" viewBox="0 0 13 16" shape-rendering="crispEdges"><rect x="0" y="0" width="10" height="1" fill="#000"/><rect x="0" y="1" width="1" height="1" fill="#000"/><rect x="1" y="1" width="7" height="1" fill="#d4d4fc"/><rect x="8" y="1" width="3" height="1" fill="#000"/><rect x="0" y="2" width="1" height="1" fill="#000"/><rect x="1" y="2" width="1" height="1" fill="#d4d4fc"/><rect x="2" y="2" width="5" height="1" fill="#fdfdfb"/><rect x="7" y="2" width="1" height="1" fill="#000"/><rect x="8" y="2" width="2" height="1" fill="#d4d4fc"/><rect x="10" y="2" width="1" height="1" fill="#000"/><rect x="0" y="3" width="1" height="1" fill="#000"/><rect x="1" y="3" width="1" height="1" fill="#d4d4fc"/><rect x="2" y="3" width="6" height="1" fill="#fdfdfb"/><rect x="8" y="3" width="1" height="1" fill="#000"/><rect x="9" y="3" width="1" height="1" fill="#d4d4fc"/><rect x="10" y="3" width="1" height="1" fill="#000"/><rect x="0" y="4" width="1" height="1" fill="#000"/><rect x="1" y="4" width="1" height="1" fill="#d4d4fc"/><rect x="2" y="4" width="7" height="1" fill="#fdfdfb"/><rect x="9" y="4" width="1" height="1" fill="#000"/><rect x="10" y="4" width="1" height="1" fill="#d4d4fc"/><rect x="11" y="4" width="1" height="1" fill="#000"/><rect x="0" y="5" width="1" height="1" fill="#000"/><rect x="1" y="5" width="1" height="1" fill="#d4d4fc"/><rect x="2" y="5" width="8" height="1" fill="#fdfdfb"/><rect x="10" y="5" width="3" height="1" fill="#000"/><rect x="0" y="6" width="1" height="1" fill="#000"/><rect x="1" y="6" width="1" height="1" fill="#d4d4fc"/><rect x="2" y="6" width="9" height="1" fill="#fdfdfb"/><rect x="11" y="6" width="1" height="1" fill="#d4d4fc"/><rect x="12" y="6" width="1" height="1" fill="#000"/><rect x="0" y="7" width="1" height="1" fill="#000"/><rect x="1" y="7" width="1" height="1" fill="#d4d4fc"/><rect x="2" y="7" width="9" height="1" fill="#fdfdfb"/><rect x="11" y="7" width="1" height="1" fill="#d4d4fc"/><rect x="12" y="7" width="1" height="1" fill="#000"/><rect x="0" y="8" width="1" height="1" fill="#000"/><rect x="1" y="8" width="1" height="1" fill="#d4d4fc"/><rect x="2" y="8" width="9" height="1" fill="#fdfdfb"/><rect x="11" y="8" width="1" height="1" fill="#d4d4fc"/><rect x="12" y="8" width="1" height="1" fill="#000"/><rect x="0" y="9" width="1" height="1" fill="#000"/><rect x="1" y="9" width="1" height="1" fill="#d4d4fc"/><rect x="2" y="9" width="9" height="1" fill="#fdfdfb"/><rect x="11" y="9" width="1" height="1" fill="#d4d4fc"/><rect x="12" y="9" width="1" height="1" fill="#000"/><rect x="0" y="10" width="1" height="1" fill="#000"/><rect x="1" y="10" width="1" height="1" fill="#d4d4fc"/><rect x="2" y="10" width="9" height="1" fill="#fdfdfb"/><rect x="11" y="10" width="1" height="1" fill="#d4d4fc"/><rect x="12" y="10" width="1" height="1" fill="#000"/><rect x="0" y="11" width="1" height="1" fill="#000"/><rect x="1" y="11" width="1" height="1" fill="#d4d4fc"/><rect x="2" y="11" width="9" height="1" fill="#fdfdfb"/><rect x="11" y="11" width="1" height="1" fill="#d4d4fc"/><rect x="12" y="11" width="1" height="1" fill="#000"/><rect x="0" y="12" width="1" height="1" fill="#000"/><rect x="1" y="12" width="1" height="1" fill="#d4d4fc"/><rect x="2" y="12" width="9" height="1" fill="#fdfdfb"/><rect x="11" y="12" width="1" height="1" fill="#d4d4fc"/><rect x="12" y="12" width="1" height="1" fill="#000"/><rect x="0" y="13" width="1" height="1" fill="#000"/><rect x="1" y="13" width="1" height="1" fill="#d4d4fc"/><rect x="2" y="13" width="9" height="1" fill="#fdfdfb"/><rect x="11" y="13" width="1" height="1" fill="#d4d4fc"/><rect x="12" y="13" width="1" height="1" fill="#000"/><rect x="0" y="14" width="1" height="1" fill="#000"/><rect x="1" y="14" width="12" height="1" fill="#d4d4fc"/><rect x="0" y="15" width="13" height="1" fill="#000"/></svg>
<div class="t" style="left:43px;top:331px;font-size:13px;font-weight:400;color:#000;">Пароль статистики</div>
<svg style="left:25px;top:352px" width="13" height="16" viewBox="0 0 13 16" shape-rendering="crispEdges"><rect x="0" y="0" width="10" height="1" fill="#000"/><rect x="0" y="1" width="1" height="1" fill="#000"/><rect x="1" y="1" width="7" height="1" fill="#d4d4fc"/><rect x="8" y="1" width="3" height="1" fill="#000"/><rect x="0" y="2" width="1" height="1" fill="#000"/><rect x="1" y="2" width="1" height="1" fill="#d4d4fc"/><rect x="2" y="2" width="5" height="1" fill="#fdfdfb"/><rect x="7" y="2" width="1" height="1" fill="#000"/><rect x="8" y="2" width="2" height="1" fill="#d4d4fc"/><rect x="10" y="2" width="1" height="1" fill="#000"/><rect x="0" y="3" width="1" height="1" fill="#000"/><rect x="1" y="3" width="1" height="1" fill="#d4d4fc"/><rect x="2" y="3" width="6" height="1" fill="#fdfdfb"/><rect x="8" y="3" width="1" height="1" fill="#000"/><rect x="9" y="3" width="1" height="1" fill="#d4d4fc"/><rect x="10" y="3" width="1" height="1" fill="#000"/><rect x="0" y="4" width="1" height="1" fill="#000"/><rect x="1" y="4" width="1" height="1" fill="#d4d4fc"/><rect x="2" y="4" width="7" height="1" fill="#fdfdfb"/><rect x="9" y="4" width="1" height="1" fill="#000"/><rect x="10" y="4" width="1" height="1" fill="#d4d4fc"/><rect x="11" y="4" width="1" height="1" fill="#000"/><rect x="0" y="5" width="1" height="1" fill="#000"/><rect x="1" y="5" width="1" height="1" fill="#d4d4fc"/><rect x="2" y="5" width="8" height="1" fill="#fdfdfb"/><rect x="10" y="5" width="3" height="1" fill="#000"/><rect x="0" y="6" width="1" height="1" fill="#000"/><rect x="1" y="6" width="1" height="1" fill="#d4d4fc"/><rect x="2" y="6" width="9" height="1" fill="#fdfdfb"/><rect x="11" y="6" width="1" height="1" fill="#d4d4fc"/><rect x="12" y="6" width="1" height="1" fill="#000"/><rect x="0" y="7" width="1" height="1" fill="#000"/><rect x="1" y="7" width="1" height="1" fill="#d4d4fc"/><rect x="2" y="7" width="9" height="1" fill="#fdfdfb"/><rect x="11" y="7" width="1" height="1" fill="#d4d4fc"/><rect x="12" y="7" width="1" height="1" fill="#000"/><rect x="0" y="8" width="1" height="1" fill="#000"/><rect x="1" y="8" width="1" height="1" fill="#d4d4fc"/><rect x="2" y="8" width="9" height="1" fill="#fdfdfb"/><rect x="11" y="8" width="1" height="1" fill="#d4d4fc"/><rect x="12" y="8" width="1" height="1" fill="#000"/><rect x="0" y="9" width="1" height="1" fill="#000"/><rect x="1" y="9" width="1" height="1" fill="#d4d4fc"/><rect x="2" y="9" width="9" height="1" fill="#fdfdfb"/><rect x="11" y="9" width="1" height="1" fill="#d4d4fc"/><rect x="12" y="9" width="1" height="1" fill="#000"/><rect x="0" y="10" width="1" height="1" fill="#000"/><rect x="1" y="10" width="1" height="1" fill="#d4d4fc"/><rect x="2" y="10" width="9" height="1" fill="#fdfdfb"/><rect x="11" y="10" width="1" height="1" fill="#d4d4fc"/><rect x="12" y="10" width="1" height="1" fill="#000"/><rect x="0" y="11" width="1" height="1" fill="#000"/><rect x="1" y="11" width="1" height="1" fill="#d4d4fc"/><rect x="2" y="11" width="9" height="1" fill="#fdfdfb"/><rect x="11" y="11" width="1" height="1" fill="#d4d4fc"/><rect x="12" y="11" width="1" height="1" fill="#000"/><rect x="0" y="12" width="1" height="1" fill="#000"/><rect x="1" y="12" width="1" height="1" fill="#d4d4fc"/><rect x="2" y="12" width="9" height="1" fill="#fdfdfb"/><rect x="11" y="12" width="1" height="1" fill="#d4d4fc"/><rect x="12" y="12" width="1" height="1" fill="#000"/><rect x="0" y="13" width="1" height="1" fill="#000"/><rect x="1" y="13" width="1" height="1" fill="#d4d4fc"/><rect x="2" y="13" width="9" height="1" fill="#fdfdfb"/><rect x="11" y="13" width="1" height="1" fill="#d4d4fc"/><rect x="12" y="13" width="1" height="1" fill="#000"/><rect x="0" y="14" width="1" height="1" fill="#000"/><rect x="1" y="14" width="12" height="1" fill="#d4d4fc"/><rect x="0" y="15" width="13" height="1" fill="#000"/></svg>
<div class="t" style="left:43px;top:351px;font-size:13px;font-weight:400;color:#000;">Управление лимитом</div>
<svg style="left:3px;top:373px" width="16" height="12" viewBox="0 0 16 12" shape-rendering="crispEdges"><rect x="10" y="0" width="6" height="1" fill="#6464a4"/><rect x="9" y="1" width="7" height="1" fill="#9494d4"/><rect x="1" y="2" width="8" height="1" fill="#000"/><rect x="9" y="2" width="6" height="1" fill="#9494d4"/><rect x="15" y="2" width="1" height="1" fill="#000"/><rect x="0" y="3" width="1" height="1" fill="#000"/><rect x="1" y="3" width="8" height="1" fill="#f4f4ff"/><rect x="9" y="3" width="7" height="1" fill="#000"/><rect x="0" y="4" width="1" height="1" fill="#000"/><rect x="1" y="4" width="1" height="1" fill="#f4f4ff"/><rect x="2" y="4" width="7" height="1" fill="#ccccfc"/><rect x="9" y="4" width="6" height="1" fill="#f4f4ff"/><rect x="15" y="4" width="1" height="1" fill="#000"/><rect x="0" y="5" width="1" height="1" fill="#000"/><rect x="1" y="5" width="1" height="1" fill="#f4f4ff"/><rect x="2" y="5" width="12" height="1" fill="#ccccfc"/><rect x="14" y="5" width="1" height="1" fill="#f4f4ff"/><rect x="15" y="5" width="1" height="1" fill="#000"/><rect x="0" y="6" width="1" height="1" fill="#000"/><rect x="1" y="6" width="1" height="1" fill="#f4f4ff"/><rect x="2" y="6" width="12" height="1" fill="#ccccfc"/><rect x="14" y="6" width="1" height="1" fill="#f4f4ff"/><rect x="15" y="6" width="1" height="1" fill="#000"/><rect x="0" y="7" width="1" height="1" fill="#000"/><rect x="1" y="7" width="1" height="1" fill="#f4f4ff"/><rect x="2" y="7" width="12" height="1" fill="#ccccfc"/><rect x="14" y="7" width="1" height="1" fill="#f4f4ff"/><rect x="15" y="7" width="1" height="1" fill="#000"/><rect x="0" y="8" width="1" height="1" fill="#000"/><rect x="1" y="8" width="1" height="1" fill="#f4f4ff"/><rect x="2" y="8" width="12" height="1" fill="#ccccfc"/><rect x="14" y="8" width="1" height="1" fill="#f4f4ff"/><rect x="15" y="8" width="1" height="1" fill="#000"/><rect x="0" y="9" width="1" height="1" fill="#000"/><rect x="1" y="9" width="1" height="1" fill="#f4f4ff"/><rect x="2" y="9" width="12" height="1" fill="#ccccfc"/><rect x="14" y="9" width="1" height="1" fill="#f4f4ff"/><rect x="15" y="9" width="1" height="1" fill="#000"/><rect x="0" y="10" width="1" height="1" fill="#000"/><rect x="1" y="10" width="14" height="1" fill="#f4f4ff"/><rect x="15" y="10" width="1" height="1" fill="#000"/><rect x="0" y="11" width="16" height="1" fill="#000"/></svg>
<div class="t" style="left:23px;top:371px;font-size:13px;font-weight:400;color:#000;">Группы</div>
<svg style="left:25px;top:392px" width="13" height="16" viewBox="0 0 13 16" shape-rendering="crispEdges"><rect x="0" y="0" width="10" height="1" fill="#000"/><rect x="0" y="1" width="1" height="1" fill="#000"/><rect x="1" y="1" width="7" height="1" fill="#d4d4fc"/><rect x="8" y="1" width="3" height="1" fill="#000"/><rect x="0" y="2" width="1" height="1" fill="#000"/><rect x="1" y="2" width="1" height="1" fill="#d4d4fc"/><rect x="2" y="2" width="5" height="1" fill="#fdfdfb"/><rect x="7" y="2" width="1" height="1" fill="#000"/><rect x="8" y="2" width="2" height="1" fill="#d4d4fc"/><rect x="10" y="2" width="1" height="1" fill="#000"/><rect x="0" y="3" width="1" height="1" fill="#000"/><rect x="1" y="3" width="1" height="1" fill="#d4d4fc"/><rect x="2" y="3" width="6" height="1" fill="#fdfdfb"/><rect x="8" y="3" width="1" height="1" fill="#000"/><rect x="9" y="3" width="1" height="1" fill="#d4d4fc"/><rect x="10" y="3" width="1" height="1" fill="#000"/><rect x="0" y="4" width="1" height="1" fill="#000"/><rect x="1" y="4" width="1" height="1" fill="#d4d4fc"/><rect x="2" y="4" width="7" height="1" fill="#fdfdfb"/><rect x="9" y="4" width="1" height="1" fill="#000"/><rect x="10" y="4" width="1" height="1" fill="#d4d4fc"/><rect x="11" y="4" width="1" height="1" fill="#000"/><rect x="0" y="5" width="1" height="1" fill="#000"/><rect x="1" y="5" width="1" height="1" fill="#d4d4fc"/><rect x="2" y="5" width="8" height="1" fill="#fdfdfb"/><rect x="10" y="5" width="3" height="1" fill="#000"/><rect x="0" y="6" width="1" height="1" fill="#000"/><rect x="1" y="6" width="1" height="1" fill="#d4d4fc"/><rect x="2" y="6" width="9" height="1" fill="#fdfdfb"/><rect x="11" y="6" width="1" height="1" fill="#d4d4fc"/><rect x="12" y="6" width="1" height="1" fill="#000"/><rect x="0" y="7" width="1" height="1" fill="#000"/><rect x="1" y="7" width="1" height="1" fill="#d4d4fc"/><rect x="2" y="7" width="9" height="1" fill="#fdfdfb"/><rect x="11" y="7" width="1" height="1" fill="#d4d4fc"/><rect x="12" y="7" width="1" height="1" fill="#000"/><rect x="0" y="8" width="1" height="1" fill="#000"/><rect x="1" y="8" width="1" height="1" fill="#d4d4fc"/><rect x="2" y="8" width="9" height="1" fill="#fdfdfb"/><rect x="11" y="8" width="1" height="1" fill="#d4d4fc"/><rect x="12" y="8" width="1" height="1" fill="#000"/><rect x="0" y="9" width="1" height="1" fill="#000"/><rect x="1" y="9" width="1" height="1" fill="#d4d4fc"/><rect x="2" y="9" width="9" height="1" fill="#fdfdfb"/><rect x="11" y="9" width="1" height="1" fill="#d4d4fc"/><rect x="12" y="9" width="1" height="1" fill="#000"/><rect x="0" y="10" width="1" height="1" fill="#000"/><rect x="1" y="10" width="1" height="1" fill="#d4d4fc"/><rect x="2" y="10" width="9" height="1" fill="#fdfdfb"/><rect x="11" y="10" width="1" height="1" fill="#d4d4fc"/><rect x="12" y="10" width="1" height="1" fill="#000"/><rect x="0" y="11" width="1" height="1" fill="#000"/><rect x="1" y="11" width="1" height="1" fill="#d4d4fc"/><rect x="2" y="11" width="9" height="1" fill="#fdfdfb"/><rect x="11" y="11" width="1" height="1" fill="#d4d4fc"/><rect x="12" y="11" width="1" height="1" fill="#000"/><rect x="0" y="12" width="1" height="1" fill="#000"/><rect x="1" y="12" width="1" height="1" fill="#d4d4fc"/><rect x="2" y="12" width="9" height="1" fill="#fdfdfb"/><rect x="11" y="12" width="1" height="1" fill="#d4d4fc"/><rect x="12" y="12" width="1" height="1" fill="#000"/><rect x="0" y="13" width="1" height="1" fill="#000"/><rect x="1" y="13" width="1" height="1" fill="#d4d4fc"/><rect x="2" y="13" width="9" height="1" fill="#fdfdfb"/><rect x="11" y="13" width="1" height="1" fill="#d4d4fc"/><rect x="12" y="13" width="1" height="1" fill="#000"/><rect x="0" y="14" width="1" height="1" fill="#000"/><rect x="1" y="14" width="12" height="1" fill="#d4d4fc"/><rect x="0" y="15" width="13" height="1" fill="#000"/></svg>
<div class="t" style="left:43px;top:391px;font-size:13px;font-weight:400;color:#000;">L</div>
<svg style="left:3px;top:413px" width="16" height="12" viewBox="0 0 16 12" shape-rendering="crispEdges"><rect x="10" y="0" width="6" height="1" fill="#6464a4"/><rect x="9" y="1" width="7" height="1" fill="#9494d4"/><rect x="1" y="2" width="8" height="1" fill="#000"/><rect x="9" y="2" width="6" height="1" fill="#9494d4"/><rect x="15" y="2" width="1" height="1" fill="#000"/><rect x="0" y="3" width="1" height="1" fill="#000"/><rect x="1" y="3" width="8" height="1" fill="#f4f4ff"/><rect x="9" y="3" width="7" height="1" fill="#000"/><rect x="0" y="4" width="1" height="1" fill="#000"/><rect x="1" y="4" width="1" height="1" fill="#f4f4ff"/><rect x="2" y="4" width="7" height="1" fill="#ccccfc"/><rect x="9" y="4" width="6" height="1" fill="#f4f4ff"/><rect x="15" y="4" width="1" height="1" fill="#000"/><rect x="0" y="5" width="1" height="1" fill="#000"/><rect x="1" y="5" width="1" height="1" fill="#f4f4ff"/><rect x="2" y="5" width="12" height="1" fill="#ccccfc"/><rect x="14" y="5" width="1" height="1" fill="#f4f4ff"/><rect x="15" y="5" width="1" height="1" fill="#000"/><rect x="0" y="6" width="1" height="1" fill="#000"/><rect x="1" y="6" width="1" height="1" fill="#f4f4ff"/><rect x="2" y="6" width="12" height="1" fill="#ccccfc"/><rect x="14" y="6" width="1" height="1" fill="#f4f4ff"/><rect x="15" y="6" width="1" height="1" fill="#000"/><rect x="0" y="7" width="1" height="1" fill="#000"/><rect x="1" y="7" width="1" height="1" fill="#f4f4ff"/><rect x="2" y="7" width="12" height="1" fill="#ccccfc"/><rect x="14" y="7" width="1" height="1" fill="#f4f4ff"/><rect x="15" y="7" width="1" height="1" fill="#000"/><rect x="0" y="8" width="1" height="1" fill="#000"/><rect x="1" y="8" width="1" height="1" fill="#f4f4ff"/><rect x="2" y="8" width="12" height="1" fill="#ccccfc"/><rect x="14" y="8" width="1" height="1" fill="#f4f4ff"/><rect x="15" y="8" width="1" height="1" fill="#000"/><rect x="0" y="9" width="1" height="1" fill="#000"/><rect x="1" y="9" width="1" height="1" fill="#f4f4ff"/><rect x="2" y="9" width="12" height="1" fill="#ccccfc"/><rect x="14" y="9" width="1" height="1" fill="#f4f4ff"/><rect x="15" y="9" width="1" height="1" fill="#000"/><rect x="0" y="10" width="1" height="1" fill="#000"/><rect x="1" y="10" width="14" height="1" fill="#f4f4ff"/><rect x="15" y="10" width="1" height="1" fill="#000"/><rect x="0" y="11" width="16" height="1" fill="#000"/></svg>
<div class="t" style="left:23px;top:411px;font-size:13px;font-weight:400;color:#000;">Тарифные планы</div>
<svg style="left:25px;top:432px" width="13" height="16" viewBox="0 0 13 16" shape-rendering="crispEdges"><rect x="0" y="0" width="10" height="1" fill="#000"/><rect x="0" y="1" width="1" height="1" fill="#000"/><rect x="1" y="1" width="7" height="1" fill="#d4d4fc"/><rect x="8" y="1" width="3" height="1" fill="#000"/><rect x="0" y="2" width="1" height="1" fill="#000"/><rect x="1" y="2" width="1" height="1" fill="#d4d4fc"/><rect x="2" y="2" width="5" height="1" fill="#fdfdfb"/><rect x="7" y="2" width="1" height="1" fill="#000"/><rect x="8" y="2" width="2" height="1" fill="#d4d4fc"/><rect x="10" y="2" width="1" height="1" fill="#000"/><rect x="0" y="3" width="1" height="1" fill="#000"/><rect x="1" y="3" width="1" height="1" fill="#d4d4fc"/><rect x="2" y="3" width="6" height="1" fill="#fdfdfb"/><rect x="8" y="3" width="1" height="1" fill="#000"/><rect x="9" y="3" width="1" height="1" fill="#d4d4fc"/><rect x="10" y="3" width="1" height="1" fill="#000"/><rect x="0" y="4" width="1" height="1" fill="#000"/><rect x="1" y="4" width="1" height="1" fill="#d4d4fc"/><rect x="2" y="4" width="7" height="1" fill="#fdfdfb"/><rect x="9" y="4" width="1" height="1" fill="#000"/><rect x="10" y="4" width="1" height="1" fill="#d4d4fc"/><rect x="11" y="4" width="1" height="1" fill="#000"/><rect x="0" y="5" width="1" height="1" fill="#000"/><rect x="1" y="5" width="1" height="1" fill="#d4d4fc"/><rect x="2" y="5" width="8" height="1" fill="#fdfdfb"/><rect x="10" y="5" width="3" height="1" fill="#000"/><rect x="0" y="6" width="1" height="1" fill="#000"/><rect x="1" y="6" width="1" height="1" fill="#d4d4fc"/><rect x="2" y="6" width="9" height="1" fill="#fdfdfb"/><rect x="11" y="6" width="1" height="1" fill="#d4d4fc"/><rect x="12" y="6" width="1" height="1" fill="#000"/><rect x="0" y="7" width="1" height="1" fill="#000"/><rect x="1" y="7" width="1" height="1" fill="#d4d4fc"/><rect x="2" y="7" width="9" height="1" fill="#fdfdfb"/><rect x="11" y="7" width="1" height="1" fill="#d4d4fc"/><rect x="12" y="7" width="1" height="1" fill="#000"/><rect x="0" y="8" width="1" height="1" fill="#000"/><rect x="1" y="8" width="1" height="1" fill="#d4d4fc"/><rect x="2" y="8" width="9" height="1" fill="#fdfdfb"/><rect x="11" y="8" width="1" height="1" fill="#d4d4fc"/><rect x="12" y="8" width="1" height="1" fill="#000"/><rect x="0" y="9" width="1" height="1" fill="#000"/><rect x="1" y="9" width="1" height="1" fill="#d4d4fc"/><rect x="2" y="9" width="9" height="1" fill="#fdfdfb"/><rect x="11" y="9" width="1" height="1" fill="#d4d4fc"/><rect x="12" y="9" width="1" height="1" fill="#000"/><rect x="0" y="10" width="1" height="1" fill="#000"/><rect x="1" y="10" width="1" height="1" fill="#d4d4fc"/><rect x="2" y="10" width="9" height="1" fill="#fdfdfb"/><rect x="11" y="10" width="1" height="1" fill="#d4d4fc"/><rect x="12" y="10" width="1" height="1" fill="#000"/><rect x="0" y="11" width="1" height="1" fill="#000"/><rect x="1" y="11" width="1" height="1" fill="#d4d4fc"/><rect x="2" y="11" width="9" height="1" fill="#fdfdfb"/><rect x="11" y="11" width="1" height="1" fill="#d4d4fc"/><rect x="12" y="11" width="1" height="1" fill="#000"/><rect x="0" y="12" width="1" height="1" fill="#000"/><rect x="1" y="12" width="1" height="1" fill="#d4d4fc"/><rect x="2" y="12" width="9" height="1" fill="#fdfdfb"/><rect x="11" y="12" width="1" height="1" fill="#d4d4fc"/><rect x="12" y="12" width="1" height="1" fill="#000"/><rect x="0" y="13" width="1" height="1" fill="#000"/><rect x="1" y="13" width="1" height="1" fill="#d4d4fc"/><rect x="2" y="13" width="9" height="1" fill="#fdfdfb"/><rect x="11" y="13" width="1" height="1" fill="#d4d4fc"/><rect x="12" y="13" width="1" height="1" fill="#000"/><rect x="0" y="14" width="1" height="1" fill="#000"/><rect x="1" y="14" width="12" height="1" fill="#d4d4fc"/><rect x="0" y="15" width="13" height="1" fill="#000"/></svg>
<div class="t" style="left:43px;top:431px;font-size:13px;font-weight:400;color:#000;">Тестовый</div>
<svg style="left:3px;top:453px" width="16" height="12" viewBox="0 0 16 12" shape-rendering="crispEdges"><rect x="10" y="0" width="6" height="1" fill="#6464a4"/><rect x="9" y="1" width="7" height="1" fill="#9494d4"/><rect x="1" y="2" width="8" height="1" fill="#000"/><rect x="9" y="2" width="6" height="1" fill="#9494d4"/><rect x="15" y="2" width="1" height="1" fill="#000"/><rect x="0" y="3" width="1" height="1" fill="#000"/><rect x="1" y="3" width="8" height="1" fill="#f4f4ff"/><rect x="9" y="3" width="7" height="1" fill="#000"/><rect x="0" y="4" width="1" height="1" fill="#000"/><rect x="1" y="4" width="1" height="1" fill="#f4f4ff"/><rect x="2" y="4" width="7" height="1" fill="#ccccfc"/><rect x="9" y="4" width="6" height="1" fill="#f4f4ff"/><rect x="15" y="4" width="1" height="1" fill="#000"/><rect x="0" y="5" width="1" height="1" fill="#000"/><rect x="1" y="5" width="1" height="1" fill="#f4f4ff"/><rect x="2" y="5" width="12" height="1" fill="#ccccfc"/><rect x="14" y="5" width="1" height="1" fill="#f4f4ff"/><rect x="15" y="5" width="1" height="1" fill="#000"/><rect x="0" y="6" width="1" height="1" fill="#000"/><rect x="1" y="6" width="1" height="1" fill="#f4f4ff"/><rect x="2" y="6" width="12" height="1" fill="#ccccfc"/><rect x="14" y="6" width="1" height="1" fill="#f4f4ff"/><rect x="15" y="6" width="1" height="1" fill="#000"/><rect x="0" y="7" width="1" height="1" fill="#000"/><rect x="1" y="7" width="1" height="1" fill="#f4f4ff"/><rect x="2" y="7" width="12" height="1" fill="#ccccfc"/><rect x="14" y="7" width="1" height="1" fill="#f4f4ff"/><rect x="15" y="7" width="1" height="1" fill="#000"/><rect x="0" y="8" width="1" height="1" fill="#000"/><rect x="1" y="8" width="1" height="1" fill="#f4f4ff"/><rect x="2" y="8" width="12" height="1" fill="#ccccfc"/><rect x="14" y="8" width="1" height="1" fill="#f4f4ff"/><rect x="15" y="8" width="1" height="1" fill="#000"/><rect x="0" y="9" width="1" height="1" fill="#000"/><rect x="1" y="9" width="1" height="1" fill="#f4f4ff"/><rect x="2" y="9" width="12" height="1" fill="#ccccfc"/><rect x="14" y="9" width="1" height="1" fill="#f4f4ff"/><rect x="15" y="9" width="1" height="1" fill="#000"/><rect x="0" y="10" width="1" height="1" fill="#000"/><rect x="1" y="10" width="14" height="1" fill="#f4f4ff"/><rect x="15" y="10" width="1" height="1" fill="#000"/><rect x="0" y="11" width="16" height="1" fill="#000"/></svg>
<div class="t" style="left:23px;top:451px;font-size:13px;font-weight:400;color:#000;">Баланс (сентябрь 2007)</div>
<svg style="left:25px;top:472px" width="13" height="16" viewBox="0 0 13 16" shape-rendering="crispEdges"><rect x="0" y="0" width="10" height="1" fill="#000"/><rect x="0" y="1" width="1" height="1" fill="#000"/><rect x="1" y="1" width="7" height="1" fill="#d4d4fc"/><rect x="8" y="1" width="3" height="1" fill="#000"/><rect x="0" y="2" width="1" height="1" fill="#000"/><rect x="1" y="2" width="1" height="1" fill="#d4d4fc"/><rect x="2" y="2" width="5" height="1" fill="#fdfdfb"/><rect x="7" y="2" width="1" height="1" fill="#000"/><rect x="8" y="2" width="2" height="1" fill="#d4d4fc"/><rect x="10" y="2" width="1" height="1" fill="#000"/><rect x="0" y="3" width="1" height="1" fill="#000"/><rect x="1" y="3" width="1" height="1" fill="#d4d4fc"/><rect x="2" y="3" width="6" height="1" fill="#fdfdfb"/><rect x="8" y="3" width="1" height="1" fill="#000"/><rect x="9" y="3" width="1" height="1" fill="#d4d4fc"/><rect x="10" y="3" width="1" height="1" fill="#000"/><rect x="0" y="4" width="1" height="1" fill="#000"/><rect x="1" y="4" width="1" height="1" fill="#d4d4fc"/><rect x="2" y="4" width="7" height="1" fill="#fdfdfb"/><rect x="9" y="4" width="1" height="1" fill="#000"/><rect x="10" y="4" width="1" height="1" fill="#d4d4fc"/><rect x="11" y="4" width="1" height="1" fill="#000"/><rect x="0" y="5" width="1" height="1" fill="#000"/><rect x="1" y="5" width="1" height="1" fill="#d4d4fc"/><rect x="2" y="5" width="8" height="1" fill="#fdfdfb"/><rect x="10" y="5" width="3" height="1" fill="#000"/><rect x="0" y="6" width="1" height="1" fill="#000"/><rect x="1" y="6" width="1" height="1" fill="#d4d4fc"/><rect x="2" y="6" width="9" height="1" fill="#fdfdfb"/><rect x="11" y="6" width="1" height="1" fill="#d4d4fc"/><rect x="12" y="6" width="1" height="1" fill="#000"/><rect x="0" y="7" width="1" height="1" fill="#000"/><rect x="1" y="7" width="1" height="1" fill="#d4d4fc"/><rect x="2" y="7" width="9" height="1" fill="#fdfdfb"/><rect x="11" y="7" width="1" height="1" fill="#d4d4fc"/><rect x="12" y="7" width="1" height="1" fill="#000"/><rect x="0" y="8" width="1" height="1" fill="#000"/><rect x="1" y="8" width="1" height="1" fill="#d4d4fc"/><rect x="2" y="8" width="9" height="1" fill="#fdfdfb"/><rect x="11" y="8" width="1" height="1" fill="#d4d4fc"/><rect x="12" y="8" width="1" height="1" fill="#000"/><rect x="0" y="9" width="1" height="1" fill="#000"/><rect x="1" y="9" width="1" height="1" fill="#d4d4fc"/><rect x="2" y="9" width="9" height="1" fill="#fdfdfb"/><rect x="11" y="9" width="1" height="1" fill="#d4d4fc"/><rect x="12" y="9" width="1" height="1" fill="#000"/><rect x="0" y="10" width="1" height="1" fill="#000"/><rect x="1" y="10" width="1" height="1" fill="#d4d4fc"/><rect x="2" y="10" width="9" height="1" fill="#fdfdfb"/><rect x="11" y="10" width="1" height="1" fill="#d4d4fc"/><rect x="12" y="10" width="1" height="1" fill="#000"/><rect x="0" y="11" width="1" height="1" fill="#000"/><rect x="1" y="11" width="1" height="1" fill="#d4d4fc"/><rect x="2" y="11" width="9" height="1" fill="#fdfdfb"/><rect x="11" y="11" width="1" height="1" fill="#d4d4fc"/><rect x="12" y="11" width="1" height="1" fill="#000"/><rect x="0" y="12" width="1" height="1" fill="#000"/><rect x="1" y="12" width="1" height="1" fill="#d4d4fc"/><rect x="2" y="12" width="9" height="1" fill="#fdfdfb"/><rect x="11" y="12" width="1" height="1" fill="#d4d4fc"/><rect x="12" y="12" width="1" height="1" fill="#000"/><rect x="0" y="13" width="1" height="1" fill="#000"/><rect x="1" y="13" width="1" height="1" fill="#d4d4fc"/><rect x="2" y="13" width="9" height="1" fill="#fdfdfb"/><rect x="11" y="13" width="1" height="1" fill="#d4d4fc"/><rect x="12" y="13" width="1" height="1" fill="#000"/><rect x="0" y="14" width="1" height="1" fill="#000"/><rect x="1" y="14" width="12" height="1" fill="#d4d4fc"/><rect x="0" y="15" width="13" height="1" fill="#000"/></svg>
<div class="t" style="left:43px;top:471px;font-size:13px;font-weight:400;color:#000;">Входящий остаток</div>
<div class="t" style="left:150px;top:469px;width:107px;text-align:right;font-size:11.3px;font-weight:400;color:#000;letter-spacing:0.7px">-60.00</div>
<svg style="left:25px;top:492px" width="13" height="16" viewBox="0 0 13 16" shape-rendering="crispEdges"><rect x="0" y="0" width="10" height="1" fill="#000"/><rect x="0" y="1" width="1" height="1" fill="#000"/><rect x="1" y="1" width="7" height="1" fill="#d4d4fc"/><rect x="8" y="1" width="3" height="1" fill="#000"/><rect x="0" y="2" width="1" height="1" fill="#000"/><rect x="1" y="2" width="1" height="1" fill="#d4d4fc"/><rect x="2" y="2" width="5" height="1" fill="#fdfdfb"/><rect x="7" y="2" width="1" height="1" fill="#000"/><rect x="8" y="2" width="2" height="1" fill="#d4d4fc"/><rect x="10" y="2" width="1" height="1" fill="#000"/><rect x="0" y="3" width="1" height="1" fill="#000"/><rect x="1" y="3" width="1" height="1" fill="#d4d4fc"/><rect x="2" y="3" width="6" height="1" fill="#fdfdfb"/><rect x="8" y="3" width="1" height="1" fill="#000"/><rect x="9" y="3" width="1" height="1" fill="#d4d4fc"/><rect x="10" y="3" width="1" height="1" fill="#000"/><rect x="0" y="4" width="1" height="1" fill="#000"/><rect x="1" y="4" width="1" height="1" fill="#d4d4fc"/><rect x="2" y="4" width="7" height="1" fill="#fdfdfb"/><rect x="9" y="4" width="1" height="1" fill="#000"/><rect x="10" y="4" width="1" height="1" fill="#d4d4fc"/><rect x="11" y="4" width="1" height="1" fill="#000"/><rect x="0" y="5" width="1" height="1" fill="#000"/><rect x="1" y="5" width="1" height="1" fill="#d4d4fc"/><rect x="2" y="5" width="8" height="1" fill="#fdfdfb"/><rect x="10" y="5" width="3" height="1" fill="#000"/><rect x="0" y="6" width="1" height="1" fill="#000"/><rect x="1" y="6" width="1" height="1" fill="#d4d4fc"/><rect x="2" y="6" width="9" height="1" fill="#fdfdfb"/><rect x="11" y="6" width="1" height="1" fill="#d4d4fc"/><rect x="12" y="6" width="1" height="1" fill="#000"/><rect x="0" y="7" width="1" height="1" fill="#000"/><rect x="1" y="7" width="1" height="1" fill="#d4d4fc"/><rect x="2" y="7" width="9" height="1" fill="#fdfdfb"/><rect x="11" y="7" width="1" height="1" fill="#d4d4fc"/><rect x="12" y="7" width="1" height="1" fill="#000"/><rect x="0" y="8" width="1" height="1" fill="#000"/><rect x="1" y="8" width="1" height="1" fill="#d4d4fc"/><rect x="2" y="8" width="9" height="1" fill="#fdfdfb"/><rect x="11" y="8" width="1" height="1" fill="#d4d4fc"/><rect x="12" y="8" width="1" height="1" fill="#000"/><rect x="0" y="9" width="1" height="1" fill="#000"/><rect x="1" y="9" width="1" height="1" fill="#d4d4fc"/><rect x="2" y="9" width="9" height="1" fill="#fdfdfb"/><rect x="11" y="9" width="1" height="1" fill="#d4d4fc"/><rect x="12" y="9" width="1" height="1" fill="#000"/><rect x="0" y="10" width="1" height="1" fill="#000"/><rect x="1" y="10" width="1" height="1" fill="#d4d4fc"/><rect x="2" y="10" width="9" height="1" fill="#fdfdfb"/><rect x="11" y="10" width="1" height="1" fill="#d4d4fc"/><rect x="12" y="10" width="1" height="1" fill="#000"/><rect x="0" y="11" width="1" height="1" fill="#000"/><rect x="1" y="11" width="1" height="1" fill="#d4d4fc"/><rect x="2" y="11" width="9" height="1" fill="#fdfdfb"/><rect x="11" y="11" width="1" height="1" fill="#d4d4fc"/><rect x="12" y="11" width="1" height="1" fill="#000"/><rect x="0" y="12" width="1" height="1" fill="#000"/><rect x="1" y="12" width="1" height="1" fill="#d4d4fc"/><rect x="2" y="12" width="9" height="1" fill="#fdfdfb"/><rect x="11" y="12" width="1" height="1" fill="#d4d4fc"/><rect x="12" y="12" width="1" height="1" fill="#000"/><rect x="0" y="13" width="1" height="1" fill="#000"/><rect x="1" y="13" width="1" height="1" fill="#d4d4fc"/><rect x="2" y="13" width="9" height="1" fill="#fdfdfb"/><rect x="11" y="13" width="1" height="1" fill="#d4d4fc"/><rect x="12" y="13" width="1" height="1" fill="#000"/><rect x="0" y="14" width="1" height="1" fill="#000"/><rect x="1" y="14" width="12" height="1" fill="#d4d4fc"/><rect x="0" y="15" width="13" height="1" fill="#000"/></svg>
<div class="t" style="left:43px;top:491px;font-size:13px;font-weight:400;color:#000;">Приход</div>
<div class="t" style="left:150px;top:489px;width:107px;text-align:right;font-size:11.3px;font-weight:400;color:#000;letter-spacing:0.2px">0.00</div>
<svg style="left:25px;top:512px" width="13" height="16" viewBox="0 0 13 16" shape-rendering="crispEdges"><rect x="0" y="0" width="10" height="1" fill="#000"/><rect x="0" y="1" width="1" height="1" fill="#000"/><rect x="1" y="1" width="7" height="1" fill="#d4d4fc"/><rect x="8" y="1" width="3" height="1" fill="#000"/><rect x="0" y="2" width="1" height="1" fill="#000"/><rect x="1" y="2" width="1" height="1" fill="#d4d4fc"/><rect x="2" y="2" width="5" height="1" fill="#fdfdfb"/><rect x="7" y="2" width="1" height="1" fill="#000"/><rect x="8" y="2" width="2" height="1" fill="#d4d4fc"/><rect x="10" y="2" width="1" height="1" fill="#000"/><rect x="0" y="3" width="1" height="1" fill="#000"/><rect x="1" y="3" width="1" height="1" fill="#d4d4fc"/><rect x="2" y="3" width="6" height="1" fill="#fdfdfb"/><rect x="8" y="3" width="1" height="1" fill="#000"/><rect x="9" y="3" width="1" height="1" fill="#d4d4fc"/><rect x="10" y="3" width="1" height="1" fill="#000"/><rect x="0" y="4" width="1" height="1" fill="#000"/><rect x="1" y="4" width="1" height="1" fill="#d4d4fc"/><rect x="2" y="4" width="7" height="1" fill="#fdfdfb"/><rect x="9" y="4" width="1" height="1" fill="#000"/><rect x="10" y="4" width="1" height="1" fill="#d4d4fc"/><rect x="11" y="4" width="1" height="1" fill="#000"/><rect x="0" y="5" width="1" height="1" fill="#000"/><rect x="1" y="5" width="1" height="1" fill="#d4d4fc"/><rect x="2" y="5" width="8" height="1" fill="#fdfdfb"/><rect x="10" y="5" width="3" height="1" fill="#000"/><rect x="0" y="6" width="1" height="1" fill="#000"/><rect x="1" y="6" width="1" height="1" fill="#d4d4fc"/><rect x="2" y="6" width="9" height="1" fill="#fdfdfb"/><rect x="11" y="6" width="1" height="1" fill="#d4d4fc"/><rect x="12" y="6" width="1" height="1" fill="#000"/><rect x="0" y="7" width="1" height="1" fill="#000"/><rect x="1" y="7" width="1" height="1" fill="#d4d4fc"/><rect x="2" y="7" width="9" height="1" fill="#fdfdfb"/><rect x="11" y="7" width="1" height="1" fill="#d4d4fc"/><rect x="12" y="7" width="1" height="1" fill="#000"/><rect x="0" y="8" width="1" height="1" fill="#000"/><rect x="1" y="8" width="1" height="1" fill="#d4d4fc"/><rect x="2" y="8" width="9" height="1" fill="#fdfdfb"/><rect x="11" y="8" width="1" height="1" fill="#d4d4fc"/><rect x="12" y="8" width="1" height="1" fill="#000"/><rect x="0" y="9" width="1" height="1" fill="#000"/><rect x="1" y="9" width="1" height="1" fill="#d4d4fc"/><rect x="2" y="9" width="9" height="1" fill="#fdfdfb"/><rect x="11" y="9" width="1" height="1" fill="#d4d4fc"/><rect x="12" y="9" width="1" height="1" fill="#000"/><rect x="0" y="10" width="1" height="1" fill="#000"/><rect x="1" y="10" width="1" height="1" fill="#d4d4fc"/><rect x="2" y="10" width="9" height="1" fill="#fdfdfb"/><rect x="11" y="10" width="1" height="1" fill="#d4d4fc"/><rect x="12" y="10" width="1" height="1" fill="#000"/><rect x="0" y="11" width="1" height="1" fill="#000"/><rect x="1" y="11" width="1" height="1" fill="#d4d4fc"/><rect x="2" y="11" width="9" height="1" fill="#fdfdfb"/><rect x="11" y="11" width="1" height="1" fill="#d4d4fc"/><rect x="12" y="11" width="1" height="1" fill="#000"/><rect x="0" y="12" width="1" height="1" fill="#000"/><rect x="1" y="12" width="1" height="1" fill="#d4d4fc"/><rect x="2" y="12" width="9" height="1" fill="#fdfdfb"/><rect x="11" y="12" width="1" height="1" fill="#d4d4fc"/><rect x="12" y="12" width="1" height="1" fill="#000"/><rect x="0" y="13" width="1" height="1" fill="#000"/><rect x="1" y="13" width="1" height="1" fill="#d4d4fc"/><rect x="2" y="13" width="9" height="1" fill="#fdfdfb"/><rect x="11" y="13" width="1" height="1" fill="#d4d4fc"/><rect x="12" y="13" width="1" height="1" fill="#000"/><rect x="0" y="14" width="1" height="1" fill="#000"/><rect x="1" y="14" width="12" height="1" fill="#d4d4fc"/><rect x="0" y="15" width="13" height="1" fill="#000"/></svg>
<div class="t" style="left:43px;top:511px;font-size:13px;font-weight:400;color:#000;">Наработка</div>
<div class="t" style="left:150px;top:509px;width:107px;text-align:right;font-size:11.3px;font-weight:400;color:#000;letter-spacing:0.2px">0.00</div>
<svg style="left:25px;top:532px" width="13" height="16" viewBox="0 0 13 16" shape-rendering="crispEdges"><rect x="0" y="0" width="10" height="1" fill="#000"/><rect x="0" y="1" width="1" height="1" fill="#000"/><rect x="1" y="1" width="7" height="1" fill="#d4d4fc"/><rect x="8" y="1" width="3" height="1" fill="#000"/><rect x="0" y="2" width="1" height="1" fill="#000"/><rect x="1" y="2" width="1" height="1" fill="#d4d4fc"/><rect x="2" y="2" width="5" height="1" fill="#fdfdfb"/><rect x="7" y="2" width="1" height="1" fill="#000"/><rect x="8" y="2" width="2" height="1" fill="#d4d4fc"/><rect x="10" y="2" width="1" height="1" fill="#000"/><rect x="0" y="3" width="1" height="1" fill="#000"/><rect x="1" y="3" width="1" height="1" fill="#d4d4fc"/><rect x="2" y="3" width="6" height="1" fill="#fdfdfb"/><rect x="8" y="3" width="1" height="1" fill="#000"/><rect x="9" y="3" width="1" height="1" fill="#d4d4fc"/><rect x="10" y="3" width="1" height="1" fill="#000"/><rect x="0" y="4" width="1" height="1" fill="#000"/><rect x="1" y="4" width="1" height="1" fill="#d4d4fc"/><rect x="2" y="4" width="7" height="1" fill="#fdfdfb"/><rect x="9" y="4" width="1" height="1" fill="#000"/><rect x="10" y="4" width="1" height="1" fill="#d4d4fc"/><rect x="11" y="4" width="1" height="1" fill="#000"/><rect x="0" y="5" width="1" height="1" fill="#000"/><rect x="1" y="5" width="1" height="1" fill="#d4d4fc"/><rect x="2" y="5" width="8" height="1" fill="#fdfdfb"/><rect x="10" y="5" width="3" height="1" fill="#000"/><rect x="0" y="6" width="1" height="1" fill="#000"/><rect x="1" y="6" width="1" height="1" fill="#d4d4fc"/><rect x="2" y="6" width="9" height="1" fill="#fdfdfb"/><rect x="11" y="6" width="1" height="1" fill="#d4d4fc"/><rect x="12" y="6" width="1" height="1" fill="#000"/><rect x="0" y="7" width="1" height="1" fill="#000"/><rect x="1" y="7" width="1" height="1" fill="#d4d4fc"/><rect x="2" y="7" width="9" height="1" fill="#fdfdfb"/><rect x="11" y="7" width="1" height="1" fill="#d4d4fc"/><rect x="12" y="7" width="1" height="1" fill="#000"/><rect x="0" y="8" width="1" height="1" fill="#000"/><rect x="1" y="8" width="1" height="1" fill="#d4d4fc"/><rect x="2" y="8" width="9" height="1" fill="#fdfdfb"/><rect x="11" y="8" width="1" height="1" fill="#d4d4fc"/><rect x="12" y="8" width="1" height="1" fill="#000"/><rect x="0" y="9" width="1" height="1" fill="#000"/><rect x="1" y="9" width="1" height="1" fill="#d4d4fc"/><rect x="2" y="9" width="9" height="1" fill="#fdfdfb"/><rect x="11" y="9" width="1" height="1" fill="#d4d4fc"/><rect x="12" y="9" width="1" height="1" fill="#000"/><rect x="0" y="10" width="1" height="1" fill="#000"/><rect x="1" y="10" width="1" height="1" fill="#d4d4fc"/><rect x="2" y="10" width="9" height="1" fill="#fdfdfb"/><rect x="11" y="10" width="1" height="1" fill="#d4d4fc"/><rect x="12" y="10" width="1" height="1" fill="#000"/><rect x="0" y="11" width="1" height="1" fill="#000"/><rect x="1" y="11" width="1" height="1" fill="#d4d4fc"/><rect x="2" y="11" width="9" height="1" fill="#fdfdfb"/><rect x="11" y="11" width="1" height="1" fill="#d4d4fc"/><rect x="12" y="11" width="1" height="1" fill="#000"/><rect x="0" y="12" width="1" height="1" fill="#000"/><rect x="1" y="12" width="1" height="1" fill="#d4d4fc"/><rect x="2" y="12" width="9" height="1" fill="#fdfdfb"/><rect x="11" y="12" width="1" height="1" fill="#d4d4fc"/><rect x="12" y="12" width="1" height="1" fill="#000"/><rect x="0" y="13" width="1" height="1" fill="#000"/><rect x="1" y="13" width="1" height="1" fill="#d4d4fc"/><rect x="2" y="13" width="9" height="1" fill="#fdfdfb"/><rect x="11" y="13" width="1" height="1" fill="#d4d4fc"/><rect x="12" y="13" width="1" height="1" fill="#000"/><rect x="0" y="14" width="1" height="1" fill="#000"/><rect x="1" y="14" width="12" height="1" fill="#d4d4fc"/><rect x="0" y="15" width="13" height="1" fill="#000"/></svg>
<div class="t" style="left:43px;top:531px;font-size:13px;font-weight:400;color:#000;">Расход</div>
<div class="t" style="left:150px;top:529px;width:107px;text-align:right;font-size:11.3px;font-weight:400;color:#000;letter-spacing:0.2px">0.00</div>
<svg style="left:25px;top:552px" width="13" height="16" viewBox="0 0 13 16" shape-rendering="crispEdges"><rect x="0" y="0" width="10" height="1" fill="#000"/><rect x="0" y="1" width="1" height="1" fill="#000"/><rect x="1" y="1" width="7" height="1" fill="#d4d4fc"/><rect x="8" y="1" width="3" height="1" fill="#000"/><rect x="0" y="2" width="1" height="1" fill="#000"/><rect x="1" y="2" width="1" height="1" fill="#d4d4fc"/><rect x="2" y="2" width="5" height="1" fill="#fdfdfb"/><rect x="7" y="2" width="1" height="1" fill="#000"/><rect x="8" y="2" width="2" height="1" fill="#d4d4fc"/><rect x="10" y="2" width="1" height="1" fill="#000"/><rect x="0" y="3" width="1" height="1" fill="#000"/><rect x="1" y="3" width="1" height="1" fill="#d4d4fc"/><rect x="2" y="3" width="6" height="1" fill="#fdfdfb"/><rect x="8" y="3" width="1" height="1" fill="#000"/><rect x="9" y="3" width="1" height="1" fill="#d4d4fc"/><rect x="10" y="3" width="1" height="1" fill="#000"/><rect x="0" y="4" width="1" height="1" fill="#000"/><rect x="1" y="4" width="1" height="1" fill="#d4d4fc"/><rect x="2" y="4" width="7" height="1" fill="#fdfdfb"/><rect x="9" y="4" width="1" height="1" fill="#000"/><rect x="10" y="4" width="1" height="1" fill="#d4d4fc"/><rect x="11" y="4" width="1" height="1" fill="#000"/><rect x="0" y="5" width="1" height="1" fill="#000"/><rect x="1" y="5" width="1" height="1" fill="#d4d4fc"/><rect x="2" y="5" width="8" height="1" fill="#fdfdfb"/><rect x="10" y="5" width="3" height="1" fill="#000"/><rect x="0" y="6" width="1" height="1" fill="#000"/><rect x="1" y="6" width="1" height="1" fill="#d4d4fc"/><rect x="2" y="6" width="9" height="1" fill="#fdfdfb"/><rect x="11" y="6" width="1" height="1" fill="#d4d4fc"/><rect x="12" y="6" width="1" height="1" fill="#000"/><rect x="0" y="7" width="1" height="1" fill="#000"/><rect x="1" y="7" width="1" height="1" fill="#d4d4fc"/><rect x="2" y="7" width="9" height="1" fill="#fdfdfb"/><rect x="11" y="7" width="1" height="1" fill="#d4d4fc"/><rect x="12" y="7" width="1" height="1" fill="#000"/><rect x="0" y="8" width="1" height="1" fill="#000"/><rect x="1" y="8" width="1" height="1" fill="#d4d4fc"/><rect x="2" y="8" width="9" height="1" fill="#fdfdfb"/><rect x="11" y="8" width="1" height="1" fill="#d4d4fc"/><rect x="12" y="8" width="1" height="1" fill="#000"/><rect x="0" y="9" width="1" height="1" fill="#000"/><rect x="1" y="9" width="1" height="1" fill="#d4d4fc"/><rect x="2" y="9" width="9" height="1" fill="#fdfdfb"/><rect x="11" y="9" width="1" height="1" fill="#d4d4fc"/><rect x="12" y="9" width="1" height="1" fill="#000"/><rect x="0" y="10" width="1" height="1" fill="#000"/><rect x="1" y="10" width="1" height="1" fill="#d4d4fc"/><rect x="2" y="10" width="9" height="1" fill="#fdfdfb"/><rect x="11" y="10" width="1" height="1" fill="#d4d4fc"/><rect x="12" y="10" width="1" height="1" fill="#000"/><rect x="0" y="11" width="1" height="1" fill="#000"/><rect x="1" y="11" width="1" height="1" fill="#d4d4fc"/><rect x="2" y="11" width="9" height="1" fill="#fdfdfb"/><rect x="11" y="11" width="1" height="1" fill="#d4d4fc"/><rect x="12" y="11" width="1" height="1" fill="#000"/><rect x="0" y="12" width="1" height="1" fill="#000"/><rect x="1" y="12" width="1" height="1" fill="#d4d4fc"/><rect x="2" y="12" width="9" height="1" fill="#fdfdfb"/><rect x="11" y="12" width="1" height="1" fill="#d4d4fc"/><rect x="12" y="12" width="1" height="1" fill="#000"/><rect x="0" y="13" width="1" height="1" fill="#000"/><rect x="1" y="13" width="1" height="1" fill="#d4d4fc"/><rect x="2" y="13" width="9" height="1" fill="#fdfdfb"/><rect x="11" y="13" width="1" height="1" fill="#d4d4fc"/><rect x="12" y="13" width="1" height="1" fill="#000"/><rect x="0" y="14" width="1" height="1" fill="#000"/><rect x="1" y="14" width="12" height="1" fill="#d4d4fc"/><rect x="0" y="15" width="13" height="1" fill="#000"/></svg>
<div class="t" style="left:43px;top:551px;font-size:13px;font-weight:400;color:#000;">Исходящий остаток</div>
<div class="t" style="left:150px;top:549px;width:107px;text-align:right;font-size:11.3px;font-weight:400;color:#000;letter-spacing:0.7px">-60.00</div>
<svg style="left:3px;top:573px" width="16" height="12" viewBox="0 0 16 12" shape-rendering="crispEdges"><rect x="10" y="0" width="6" height="1" fill="#6464a4"/><rect x="9" y="1" width="7" height="1" fill="#9494d4"/><rect x="1" y="2" width="8" height="1" fill="#000"/><rect x="9" y="2" width="6" height="1" fill="#9494d4"/><rect x="15" y="2" width="1" height="1" fill="#000"/><rect x="0" y="3" width="1" height="1" fill="#000"/><rect x="1" y="3" width="8" height="1" fill="#f4f4ff"/><rect x="9" y="3" width="7" height="1" fill="#000"/><rect x="0" y="4" width="1" height="1" fill="#000"/><rect x="1" y="4" width="1" height="1" fill="#f4f4ff"/><rect x="2" y="4" width="7" height="1" fill="#ccccfc"/><rect x="9" y="4" width="6" height="1" fill="#f4f4ff"/><rect x="15" y="4" width="1" height="1" fill="#000"/><rect x="0" y="5" width="1" height="1" fill="#000"/><rect x="1" y="5" width="1" height="1" fill="#f4f4ff"/><rect x="2" y="5" width="12" height="1" fill="#ccccfc"/><rect x="14" y="5" width="1" height="1" fill="#f4f4ff"/><rect x="15" y="5" width="1" height="1" fill="#000"/><rect x="0" y="6" width="1" height="1" fill="#000"/><rect x="1" y="6" width="1" height="1" fill="#f4f4ff"/><rect x="2" y="6" width="12" height="1" fill="#ccccfc"/><rect x="14" y="6" width="1" height="1" fill="#f4f4ff"/><rect x="15" y="6" width="1" height="1" fill="#000"/><rect x="0" y="7" width="1" height="1" fill="#000"/><rect x="1" y="7" width="1" height="1" fill="#f4f4ff"/><rect x="2" y="7" width="12" height="1" fill="#ccccfc"/><rect x="14" y="7" width="1" height="1" fill="#f4f4ff"/><rect x="15" y="7" width="1" height="1" fill="#000"/><rect x="0" y="8" width="1" height="1" fill="#000"/><rect x="1" y="8" width="1" height="1" fill="#f4f4ff"/><rect x="2" y="8" width="12" height="1" fill="#ccccfc"/><rect x="14" y="8" width="1" height="1" fill="#f4f4ff"/><rect x="15" y="8" width="1" height="1" fill="#000"/><rect x="0" y="9" width="1" height="1" fill="#000"/><rect x="1" y="9" width="1" height="1" fill="#f4f4ff"/><rect x="2" y="9" width="12" height="1" fill="#ccccfc"/><rect x="14" y="9" width="1" height="1" fill="#f4f4ff"/><rect x="15" y="9" width="1" height="1" fill="#000"/><rect x="0" y="10" width="1" height="1" fill="#000"/><rect x="1" y="10" width="14" height="1" fill="#f4f4ff"/><rect x="15" y="10" width="1" height="1" fill="#000"/><rect x="0" y="11" width="16" height="1" fill="#000"/></svg>
<div class="t" style="left:23px;top:571px;font-size:13px;font-weight:400;color:#000;">Модули</div>
<svg style="left:25px;top:592px" width="13" height="16" viewBox="0 0 13 16" shape-rendering="crispEdges"><rect x="0" y="0" width="10" height="1" fill="#000"/><rect x="0" y="1" width="1" height="1" fill="#000"/><rect x="1" y="1" width="7" height="1" fill="#d4d4fc"/><rect x="8" y="1" width="3" height="1" fill="#000"/><rect x="0" y="2" width="1" height="1" fill="#000"/><rect x="1" y="2" width="1" height="1" fill="#d4d4fc"/><rect x="2" y="2" width="5" height="1" fill="#fdfdfb"/><rect x="7" y="2" width="1" height="1" fill="#000"/><rect x="8" y="2" width="2" height="1" fill="#d4d4fc"/><rect x="10" y="2" width="1" height="1" fill="#000"/><rect x="0" y="3" width="1" height="1" fill="#000"/><rect x="1" y="3" width="1" height="1" fill="#d4d4fc"/><rect x="2" y="3" width="6" height="1" fill="#fdfdfb"/><rect x="8" y="3" width="1" height="1" fill="#000"/><rect x="9" y="3" width="1" height="1" fill="#d4d4fc"/><rect x="10" y="3" width="1" height="1" fill="#000"/><rect x="0" y="4" width="1" height="1" fill="#000"/><rect x="1" y="4" width="1" height="1" fill="#d4d4fc"/><rect x="2" y="4" width="7" height="1" fill="#fdfdfb"/><rect x="9" y="4" width="1" height="1" fill="#000"/><rect x="10" y="4" width="1" height="1" fill="#d4d4fc"/><rect x="11" y="4" width="1" height="1" fill="#000"/><rect x="0" y="5" width="1" height="1" fill="#000"/><rect x="1" y="5" width="1" height="1" fill="#d4d4fc"/><rect x="2" y="5" width="8" height="1" fill="#fdfdfb"/><rect x="10" y="5" width="3" height="1" fill="#000"/><rect x="0" y="6" width="1" height="1" fill="#000"/><rect x="1" y="6" width="1" height="1" fill="#d4d4fc"/><rect x="2" y="6" width="9" height="1" fill="#fdfdfb"/><rect x="11" y="6" width="1" height="1" fill="#d4d4fc"/><rect x="12" y="6" width="1" height="1" fill="#000"/><rect x="0" y="7" width="1" height="1" fill="#000"/><rect x="1" y="7" width="1" height="1" fill="#d4d4fc"/><rect x="2" y="7" width="9" height="1" fill="#fdfdfb"/><rect x="11" y="7" width="1" height="1" fill="#d4d4fc"/><rect x="12" y="7" width="1" height="1" fill="#000"/><rect x="0" y="8" width="1" height="1" fill="#000"/><rect x="1" y="8" width="1" height="1" fill="#d4d4fc"/><rect x="2" y="8" width="9" height="1" fill="#fdfdfb"/><rect x="11" y="8" width="1" height="1" fill="#d4d4fc"/><rect x="12" y="8" width="1" height="1" fill="#000"/><rect x="0" y="9" width="1" height="1" fill="#000"/><rect x="1" y="9" width="1" height="1" fill="#d4d4fc"/><rect x="2" y="9" width="9" height="1" fill="#fdfdfb"/><rect x="11" y="9" width="1" height="1" fill="#d4d4fc"/><rect x="12" y="9" width="1" height="1" fill="#000"/><rect x="0" y="10" width="1" height="1" fill="#000"/><rect x="1" y="10" width="1" height="1" fill="#d4d4fc"/><rect x="2" y="10" width="9" height="1" fill="#fdfdfb"/><rect x="11" y="10" width="1" height="1" fill="#d4d4fc"/><rect x="12" y="10" width="1" height="1" fill="#000"/><rect x="0" y="11" width="1" height="1" fill="#000"/><rect x="1" y="11" width="1" height="1" fill="#d4d4fc"/><rect x="2" y="11" width="9" height="1" fill="#fdfdfb"/><rect x="11" y="11" width="1" height="1" fill="#d4d4fc"/><rect x="12" y="11" width="1" height="1" fill="#000"/><rect x="0" y="12" width="1" height="1" fill="#000"/><rect x="1" y="12" width="1" height="1" fill="#d4d4fc"/><rect x="2" y="12" width="9" height="1" fill="#fdfdfb"/><rect x="11" y="12" width="1" height="1" fill="#d4d4fc"/><rect x="12" y="12" width="1" height="1" fill="#000"/><rect x="0" y="13" width="1" height="1" fill="#000"/><rect x="1" y="13" width="1" height="1" fill="#d4d4fc"/><rect x="2" y="13" width="9" height="1" fill="#fdfdfb"/><rect x="11" y="13" width="1" height="1" fill="#d4d4fc"/><rect x="12" y="13" width="1" height="1" fill="#000"/><rect x="0" y="14" width="1" height="1" fill="#000"/><rect x="1" y="14" width="12" height="1" fill="#d4d4fc"/><rect x="0" y="15" width="13" height="1" fill="#000"/></svg>
<div class="t" style="left:43px;top:591px;font-size:13px;font-weight:400;color:#000;">IPN</div>
<div class="t" style="left:150px;top:589px;width:107px;text-align:right;font-size:11.3px;font-weight:400;color:#000;letter-spacing:0.7px">открыт</div>
<svg style="left:5px;top:612px" width="13" height="16" viewBox="0 0 13 16" shape-rendering="crispEdges"><rect x="0" y="0" width="10" height="1" fill="#000"/><rect x="0" y="1" width="1" height="1" fill="#000"/><rect x="1" y="1" width="7" height="1" fill="#d4d4fc"/><rect x="8" y="1" width="3" height="1" fill="#000"/><rect x="0" y="2" width="1" height="1" fill="#000"/><rect x="1" y="2" width="1" height="1" fill="#d4d4fc"/><rect x="2" y="2" width="5" height="1" fill="#fdfdfb"/><rect x="7" y="2" width="1" height="1" fill="#000"/><rect x="8" y="2" width="2" height="1" fill="#d4d4fc"/><rect x="10" y="2" width="1" height="1" fill="#000"/><rect x="0" y="3" width="1" height="1" fill="#000"/><rect x="1" y="3" width="1" height="1" fill="#d4d4fc"/><rect x="2" y="3" width="6" height="1" fill="#fdfdfb"/><rect x="8" y="3" width="1" height="1" fill="#000"/><rect x="9" y="3" width="1" height="1" fill="#d4d4fc"/><rect x="10" y="3" width="1" height="1" fill="#000"/><rect x="0" y="4" width="1" height="1" fill="#000"/><rect x="1" y="4" width="1" height="1" fill="#d4d4fc"/><rect x="2" y="4" width="7" height="1" fill="#fdfdfb"/><rect x="9" y="4" width="1" height="1" fill="#000"/><rect x="10" y="4" width="1" height="1" fill="#d4d4fc"/><rect x="11" y="4" width="1" height="1" fill="#000"/><rect x="0" y="5" width="1" height="1" fill="#000"/><rect x="1" y="5" width="1" height="1" fill="#d4d4fc"/><rect x="2" y="5" width="8" height="1" fill="#fdfdfb"/><rect x="10" y="5" width="3" height="1" fill="#000"/><rect x="0" y="6" width="1" height="1" fill="#000"/><rect x="1" y="6" width="1" height="1" fill="#d4d4fc"/><rect x="2" y="6" width="9" height="1" fill="#fdfdfb"/><rect x="11" y="6" width="1" height="1" fill="#d4d4fc"/><rect x="12" y="6" width="1" height="1" fill="#000"/><rect x="0" y="7" width="1" height="1" fill="#000"/><rect x="1" y="7" width="1" height="1" fill="#d4d4fc"/><rect x="2" y="7" width="9" height="1" fill="#fdfdfb"/><rect x="11" y="7" width="1" height="1" fill="#d4d4fc"/><rect x="12" y="7" width="1" height="1" fill="#000"/><rect x="0" y="8" width="1" height="1" fill="#000"/><rect x="1" y="8" width="1" height="1" fill="#d4d4fc"/><rect x="2" y="8" width="9" height="1" fill="#fdfdfb"/><rect x="11" y="8" width="1" height="1" fill="#d4d4fc"/><rect x="12" y="8" width="1" height="1" fill="#000"/><rect x="0" y="9" width="1" height="1" fill="#000"/><rect x="1" y="9" width="1" height="1" fill="#d4d4fc"/><rect x="2" y="9" width="9" height="1" fill="#fdfdfb"/><rect x="11" y="9" width="1" height="1" fill="#d4d4fc"/><rect x="12" y="9" width="1" height="1" fill="#000"/><rect x="0" y="10" width="1" height="1" fill="#000"/><rect x="1" y="10" width="1" height="1" fill="#d4d4fc"/><rect x="2" y="10" width="9" height="1" fill="#fdfdfb"/><rect x="11" y="10" width="1" height="1" fill="#d4d4fc"/><rect x="12" y="10" width="1" height="1" fill="#000"/><rect x="0" y="11" width="1" height="1" fill="#000"/><rect x="1" y="11" width="1" height="1" fill="#d4d4fc"/><rect x="2" y="11" width="9" height="1" fill="#fdfdfb"/><rect x="11" y="11" width="1" height="1" fill="#d4d4fc"/><rect x="12" y="11" width="1" height="1" fill="#000"/><rect x="0" y="12" width="1" height="1" fill="#000"/><rect x="1" y="12" width="1" height="1" fill="#d4d4fc"/><rect x="2" y="12" width="9" height="1" fill="#fdfdfb"/><rect x="11" y="12" width="1" height="1" fill="#d4d4fc"/><rect x="12" y="12" width="1" height="1" fill="#000"/><rect x="0" y="13" width="1" height="1" fill="#000"/><rect x="1" y="13" width="1" height="1" fill="#d4d4fc"/><rect x="2" y="13" width="9" height="1" fill="#fdfdfb"/><rect x="11" y="13" width="1" height="1" fill="#d4d4fc"/><rect x="12" y="13" width="1" height="1" fill="#000"/><rect x="0" y="14" width="1" height="1" fill="#000"/><rect x="1" y="14" width="12" height="1" fill="#d4d4fc"/><rect x="0" y="15" width="13" height="1" fill="#000"/></svg>
<div class="t" style="left:23px;top:611px;font-size:13px;font-weight:400;color:#000;">Примечания</div>
<div style="left:10px;top:330px;width:1px;height:19px;background:#c4c4f4"></div>
<div style="left:11px;top:340px;width:9px;height:1px;background:#c4c4f4"></div>
<div style="left:10px;top:350px;width:1px;height:11px;background:#c4c4f4"></div>
<div style="left:11px;top:360px;width:9px;height:1px;background:#c4c4f4"></div>
<div style="left:10px;top:390px;width:1px;height:11px;background:#c4c4f4"></div>
<div style="left:11px;top:400px;width:9px;height:1px;background:#c4c4f4"></div>
<div style="left:10px;top:430px;width:1px;height:11px;background:#c4c4f4"></div>
<div style="left:11px;top:440px;width:9px;height:1px;background:#c4c4f4"></div>
<div style="left:10px;top:470px;width:1px;height:19px;background:#c4c4f4"></div>
<div style="left:11px;top:480px;width:9px;height:1px;background:#c4c4f4"></div>
<div style="left:10px;top:490px;width:1px;height:19px;background:#c4c4f4"></div>
<div style="left:11px;top:500px;width:9px;height:1px;background:#c4c4f4"></div>
<div style="left:10px;top:510px;width:1px;height:19px;background:#c4c4f4"></div>
<div style="left:11px;top:520px;width:9px;height:1px;background:#c4c4f4"></div>
<div style="left:10px;top:530px;width:1px;height:19px;background:#c4c4f4"></div>
<div style="left:11px;top:540px;width:9px;height:1px;background:#c4c4f4"></div>
<div style="left:10px;top:550px;width:1px;height:11px;background:#c4c4f4"></div>
<div style="left:11px;top:560px;width:9px;height:1px;background:#c4c4f4"></div>
<div style="left:10px;top:590px;width:1px;height:11px;background:#c4c4f4"></div>
<div style="left:11px;top:600px;width:9px;height:1px;background:#c4c4f4"></div>
<div style="left:262px;top:155px;width:1px;height:686px;background:#ffffff"></div>
<div style="left:266px;top:155px;width:1px;height:686px;background:#6e6f6c"></div>
<div style="left:8px;top:825px;width:12px;height:13px;border:1px solid #ffffff;box-sizing:border-box"></div>
<div style="left:7px;top:824px;width:12px;height:13px;border:1px solid #6e6f6c;box-sizing:border-box"></div>
<div class="t" style="left:25px;top:821px;font-size:12px;font-weight:700;color:#000;">Скрытый</div>
<div style="left:272px;top:163px;width:592px;height:45px;border:2px solid #9a9b98;box-sizing:border-box"></div>
<div style="left:277px;top:163px;width:51px;height:2px;background:#cacdc8"></div>
<div class="t" style="left:283px;top:154px;font-size:12.8px;font-weight:700;color:#000;">Лимит</div>
<div style="left:282px;top:177px;width:112px;height:22px;background:#ffffff"></div>
<div style="left:282px;top:177px;width:113px;height:23px;border:1px solid #ffffff;box-sizing:border-box"></div>
<div style="left:281px;top:176px;width:113px;height:23px;border:1px solid #6e6f6c;box-sizing:border-box"></div>
<div class="t" style="left:281px;top:178px;width:113px;text-align:center;font-size:13px;font-weight:400;color:#000;letter-spacing:0.5px">-100.0</div>
<svg style="left:401px;top:182px" width="8" height="15"><path d="M6.5 0.5 L1.5 14" stroke="#000" stroke-width="1.1"/></svg>
<div style="left:415px;top:177px;width:57px;height:22px;background:#ffffff"></div>
<div style="left:415px;top:177px;width:58px;height:23px;border:1px solid #ffffff;box-sizing:border-box"></div>
<div style="left:414px;top:176px;width:58px;height:23px;border:1px solid #6e6f6c;box-sizing:border-box"></div>
<div class="t" style="left:414px;top:178px;width:58px;text-align:center;font-size:13px;font-weight:400;color:#000;">3</div>
<div style="left:484px;top:177px;width:309px;height:22px;background:#ffffff"></div>
<div style="left:484px;top:177px;width:310px;height:23px;border:1px solid #ffffff;box-sizing:border-box"></div>
<div style="left:483px;top:176px;width:310px;height:23px;border:1px solid #6e6f6c;box-sizing:border-box"></div>
<div class="t" style="left:486px;top:178px;font-size:12.3px;font-weight:400;color:#000;">Обещал оплатить</div>
<div style="left:805px;top:177px;width:50px;height:23px;border:1px solid #ffffff;box-sizing:border-box"></div>
<div style="left:804px;top:176px;width:50px;height:23px;border:1px solid #6e6f6c;box-sizing:border-box"></div>
<div style="left:820px;top:180px;width:20px;height:16px;border:1px solid #a8a8e0;box-sizing:border-box"></div>
<div class="t" style="left:822px;top:178px;font-size:11px;font-weight:700;color:#000;letter-spacing:0.3px">OK</div>
<div style="left:869px;top:163px;width:145px;height:45px;border:2px solid #9a9b98;box-sizing:border-box"></div>
<div style="left:874px;top:163px;width:127px;height:2px;background:#cacdc8"></div>
<div class="t" style="left:880px;top:154px;font-size:12.5px;font-weight:700;color:#000;">Сортировка (дата)</div>
<div style="left:904px;top:176px;width:32px;height:25px;border:1px solid #ffffff;box-sizing:border-box"></div>
<div style="left:903px;top:175px;width:32px;height:25px;border:1px solid #6e6f6c;box-sizing:border-box"></div>
<div style="left:904px;top:176px;width:30px;height:23px;background:#9a9b98"></div>
<div style="left:947px;top:176px;width:32px;height:25px;border:1px solid #ffffff;box-sizing:border-box"></div>
<div style="left:946px;top:175px;width:32px;height:25px;border:1px solid #6e6f6c;box-sizing:border-box"></div>
<svg width="11" height="12" style="left:914px;top:183px" shape-rendering="crispEdges"><path d="M3 0 H7 V6 H10 L5 11 L0 6 H3 Z" fill="#221a8a"/></svg>
<svg width="11" height="12" style="left:957px;top:183px" shape-rendering="crispEdges"><path d="M3 11 H7 V5 H10 L5 0 L0 5 H3 Z" fill="#221a8a"/></svg>
<div style="left:1018px;top:163px;width:281px;height:45px;border:2px solid #9a9b98;box-sizing:border-box"></div>
<div style="left:1024px;top:163px;width:75px;height:2px;background:#cacdc8"></div>
<div class="t" style="left:1030px;top:154px;font-size:13px;font-weight:700;color:#000;">Страница</div>
<div style="left:1023px;top:178px;width:25px;height:25px;border:1px solid #ffffff;box-sizing:border-box"></div>
<div style="left:1022px;top:177px;width:25px;height:25px;border:1px solid #6e6f6c;box-sizing:border-box"></div>
<div style="left:1049px;top:178px;width:25px;height:25px;border:1px solid #ffffff;box-sizing:border-box"></div>
<div style="left:1048px;top:177px;width:25px;height:25px;border:1px solid #6e6f6c;box-sizing:border-box"></div>
<div style="left:1074px;top:177px;width:1px;height:25px;background:#6e6f6c"></div>
<div style="left:1074px;top:177px;width:169px;height:1px;background:#6e6f6c"></div>
<div class="t" style="left:1074px;top:181px;width:169px;text-align:center;font-size:13px;font-weight:400;color:#000;letter-spacing:0.4px">1 из 1 [25]</div>
<div style="left:1244px;top:178px;width:25px;height:25px;border:1px solid #ffffff;box-sizing:border-box"></div>
<div style="left:1243px;top:177px;width:25px;height:25px;border:1px solid #6e6f6c;box-sizing:border-box"></div>
<div style="left:1270px;top:178px;width:25px;height:25px;border:1px solid #ffffff;box-sizing:border-box"></div>
<div style="left:1269px;top:177px;width:25px;height:25px;border:1px solid #6e6f6c;box-sizing:border-box"></div>
<svg width="12" height="10" style="left:1030px;top:186px"><rect x="0" y="0" width="1.6" height="8.5" fill="#000"/><path d="M10 0 V8.5 L2 4.25 Z" fill="#000"/></svg>
<svg width="12" height="10" style="left:1055px;top:186px"><path d="M9 0 V8.5 L1 4.25 Z" fill="#000"/></svg>
<svg width="12" height="10" style="left:1252px;top:186px"><path d="M1 0 V8.5 L9 4.25 Z" fill="#000"/></svg>
<svg width="12" height="10" style="left:1277px;top:186px"><path d="M0 0 V8.5 L8 4.25 Z" fill="#000"/><rect x="8.6" y="0" width="1.6" height="8.5" fill="#000"/></svg>
<div style="left:271px;top:217px;width:146px;height:22px;border:1px solid #ffffff;box-sizing:border-box"></div>
<div style="left:270px;top:216px;width:146px;height:22px;border:1px solid #6e6f6c;box-sizing:border-box"></div>
<div class="t" style="left:270px;top:218px;width:147px;text-align:center;font-size:11px;font-weight:700;color:#000;letter-spacing:1.3px">=-1000</div>
<div style="left:418px;top:217px;width:146px;height:22px;border:1px solid #ffffff;box-sizing:border-box"></div>
<div style="left:417px;top:216px;width:146px;height:22px;border:1px solid #6e6f6c;box-sizing:border-box"></div>
<div class="t" style="left:417px;top:218px;width:147px;text-align:center;font-size:11px;font-weight:700;color:#000;letter-spacing:1.3px">=-500</div>
<div style="left:565px;top:217px;width:146px;height:22px;border:1px solid #ffffff;box-sizing:border-box"></div>
<div style="left:564px;top:216px;width:146px;height:22px;border:1px solid #6e6f6c;box-sizing:border-box"></div>
<div class="t" style="left:564px;top:218px;width:147px;text-align:center;font-size:11px;font-weight:700;color:#000;letter-spacing:1.3px">=-300</div>
<div style="left:712px;top:217px;width:146px;height:22px;border:1px solid #ffffff;box-sizing:border-box"></div>
<div style="left:711px;top:216px;width:146px;height:22px;border:1px solid #6e6f6c;box-sizing:border-box"></div>
<div class="t" style="left:711px;top:218px;width:147px;text-align:center;font-size:11px;font-weight:700;color:#000;letter-spacing:1.3px">=-150</div>
<div style="left:859px;top:217px;width:146px;height:22px;border:1px solid #ffffff;box-sizing:border-box"></div>
<div style="left:858px;top:216px;width:146px;height:22px;border:1px solid #6e6f6c;box-sizing:border-box"></div>
<div class="t" style="left:858px;top:218px;width:147px;text-align:center;font-size:11px;font-weight:700;color:#000;letter-spacing:1.3px">=-100</div>
<div style="left:1006px;top:217px;width:146px;height:22px;border:1px solid #ffffff;box-sizing:border-box"></div>
<div style="left:1005px;top:216px;width:146px;height:22px;border:1px solid #6e6f6c;box-sizing:border-box"></div>
<div class="t" style="left:1005px;top:218px;width:147px;text-align:center;font-size:11px;font-weight:700;color:#000;letter-spacing:1.3px">=-50</div>
<div style="left:1153px;top:217px;width:146px;height:22px;border:1px solid #ffffff;box-sizing:border-box"></div>
<div style="left:1152px;top:216px;width:146px;height:22px;border:1px solid #6e6f6c;box-sizing:border-box"></div>
<div class="t" style="left:1152px;top:218px;width:146px;text-align:center;font-size:11px;font-weight:700;color:#000;letter-spacing:1.3px">=-10</div>
<div style="left:271px;top:241px;width:146px;height:22px;border:1px solid #ffffff;box-sizing:border-box"></div>
<div style="left:270px;top:240px;width:146px;height:22px;border:1px solid #6e6f6c;box-sizing:border-box"></div>
<div class="t" style="left:270px;top:242px;width:147px;text-align:center;font-size:11px;font-weight:700;color:#000;letter-spacing:1.3px">=0</div>
<div style="left:418px;top:241px;width:146px;height:22px;border:1px solid #ffffff;box-sizing:border-box"></div>
<div style="left:417px;top:240px;width:146px;height:22px;border:1px solid #6e6f6c;box-sizing:border-box"></div>
<div class="t" style="left:417px;top:242px;width:147px;text-align:center;font-size:11px;font-weight:700;color:#000;letter-spacing:1.3px">-5/1</div>
<div style="left:565px;top:241px;width:146px;height:22px;border:1px solid #ffffff;box-sizing:border-box"></div>
<div style="left:564px;top:240px;width:146px;height:22px;border:1px solid #6e6f6c;box-sizing:border-box"></div>
<div class="t" style="left:564px;top:242px;width:147px;text-align:center;font-size:11px;font-weight:700;color:#000;letter-spacing:1.3px">-30/1</div>
<div style="left:712px;top:241px;width:146px;height:22px;border:1px solid #ffffff;box-sizing:border-box"></div>
<div style="left:711px;top:240px;width:146px;height:22px;border:1px solid #6e6f6c;box-sizing:border-box"></div>
<div class="t" style="left:711px;top:242px;width:147px;text-align:center;font-size:11px;font-weight:700;color:#000;letter-spacing:1.3px">-100/1</div>
<div style="left:859px;top:241px;width:146px;height:22px;border:1px solid #ffffff;box-sizing:border-box"></div>
<div style="left:858px;top:240px;width:146px;height:22px;border:1px solid #6e6f6c;box-sizing:border-box"></div>
<div class="t" style="left:858px;top:242px;width:147px;text-align:center;font-size:11px;font-weight:700;color:#000;letter-spacing:1.3px">-15/3</div>
<div style="left:1006px;top:241px;width:146px;height:22px;border:1px solid #ffffff;box-sizing:border-box"></div>
<div style="left:1005px;top:240px;width:146px;height:22px;border:1px solid #6e6f6c;box-sizing:border-box"></div>
<div class="t" style="left:1005px;top:242px;width:147px;text-align:center;font-size:11px;font-weight:700;color:#000;letter-spacing:1.3px">-50/3</div>
<div style="left:1153px;top:241px;width:146px;height:22px;border:1px solid #ffffff;box-sizing:border-box"></div>
<div style="left:1152px;top:240px;width:146px;height:22px;border:1px solid #6e6f6c;box-sizing:border-box"></div>
<div class="t" style="left:1152px;top:242px;width:146px;text-align:center;font-size:11px;font-weight:700;color:#000;letter-spacing:1.3px">-100/3</div>
<div style="left:271px;top:270px;width:1030px;height:401px;border:1px solid #ffffff;box-sizing:border-box"></div>
<div style="left:270px;top:269px;width:1030px;height:401px;border:1px solid #6e6f6c;box-sizing:border-box"></div>
<div style="left:271px;top:270px;width:1028px;height:15px;background:#cacdc8"></div>
<div style="left:271px;top:270px;width:1px;height:14px;background:#ffffff"></div>
<div style="left:420px;top:270px;width:1px;height:15px;background:#6e6f6c"></div>
<div class="t" style="left:271px;top:268px;width:150px;text-align:center;font-size:12.5px;font-weight:400;color:#000;">Дата</div>
<div style="left:421px;top:270px;width:1px;height:14px;background:#ffffff"></div>
<div style="left:670px;top:270px;width:1px;height:15px;background:#6e6f6c"></div>
<div class="t" style="left:421px;top:268px;width:250px;text-align:center;font-size:12.5px;font-weight:400;color:#000;">Пользователь</div>
<div style="left:671px;top:270px;width:1px;height:14px;background:#ffffff"></div>
<div style="left:750px;top:270px;width:1px;height:15px;background:#6e6f6c"></div>
<div class="t" style="left:671px;top:268px;width:80px;text-align:center;font-size:12.5px;font-weight:400;color:#000;">Лимит</div>
<div style="left:751px;top:270px;width:1px;height:14px;background:#ffffff"></div>
<div style="left:800px;top:270px;width:1px;height:15px;background:#6e6f6c"></div>
<div class="t" style="left:751px;top:268px;width:50px;text-align:center;font-size:12.5px;font-weight:400;color:#000;">Дней</div>
<div style="left:801px;top:270px;width:1px;height:14px;background:#ffffff"></div>
<div style="left:1298px;top:270px;width:1px;height:15px;background:#6e6f6c"></div>
<div class="t" style="left:801px;top:268px;width:498px;text-align:center;font-size:12.5px;font-weight:400;color:#000;">Комментарий</div>
<div style="left:271px;top:270px;width:1028px;height:1px;background:#ffffff"></div>
<div style="left:271px;top:284px;width:1028px;height:1px;background:#6e6f6c"></div>
<div style="left:271px;top:285px;width:1028px;height:15px;background:#ffffff"></div>
<div style="left:271px;top:300px;width:1028px;height:1px;background:#a6a7a4"></div>
<div style="left:420px;top:285px;width:1px;height:16px;background:#a6a7a4"></div>
<div style="left:670px;top:285px;width:1px;height:16px;background:#a6a7a4"></div>
<div style="left:750px;top:285px;width:1px;height:16px;background:#a6a7a4"></div>
<div style="left:800px;top:285px;width:1px;height:16px;background:#a6a7a4"></div>
<div class="t" style="left:272px;top:282px;font-size:11.8px;font-weight:400;color:#000;letter-spacing:0.35px">22.02.2008 01:35:21</div>
<div class="t" style="left:422px;top:282px;font-size:11.8px;font-weight:400;color:#000;letter-spacing:0.35px">Шамиль</div>
<div class="t" style="left:672px;top:282px;font-size:11.8px;font-weight:400;color:#000;letter-spacing:0.35px">-100.0</div>
<div class="t" style="left:752px;top:282px;font-size:11.8px;font-weight:400;color:#000;letter-spacing:0.35px">3</div>
<div class="t" style="left:802px;top:282px;font-size:11.8px;font-weight:400;color:#000;letter-spacing:0.35px">Обещал оплатить</div>
<div class="t" style="left:280px;top:672px;font-size:12.6px;font-weight:700;color:#000;">Автоматическое изменение лимита:</div>
<div style="left:271px;top:693px;width:1030px;height:149px;border:1px solid #ffffff;box-sizing:border-box"></div>
<div style="left:270px;top:692px;width:1030px;height:149px;border:1px solid #6e6f6c;box-sizing:border-box"></div>
<div style="left:271px;top:693px;width:1028px;height:14px;background:#cacdc8"></div>
<div style="left:271px;top:693px;width:1px;height:14px;background:#ffffff"></div>
<div style="left:420px;top:693px;width:1px;height:15px;background:#6e6f6c"></div>
<div class="t" style="left:271px;top:691px;width:150px;text-align:center;font-size:12.5px;font-weight:400;color:#000;">Дата</div>
<div style="left:421px;top:693px;width:1px;height:14px;background:#ffffff"></div>
<div style="left:670px;top:693px;width:1px;height:15px;background:#6e6f6c"></div>
<div class="t" style="left:421px;top:691px;width:250px;text-align:center;font-size:12.5px;font-weight:400;color:#000;">Пользователь</div>
<div style="left:671px;top:693px;width:1px;height:14px;background:#ffffff"></div>
<div style="left:1298px;top:693px;width:1px;height:15px;background:#6e6f6c"></div>
<div class="t" style="left:671px;top:691px;width:628px;text-align:center;font-size:12.5px;font-weight:400;color:#000;">Изменение лимита на</div>
<div style="left:271px;top:693px;width:1028px;height:1px;background:#ffffff"></div>
<div style="left:271px;top:707px;width:1028px;height:1px;background:#6e6f6c"></div>
<div style="left:271px;top:708px;width:1028px;height:15px;background:#ffffff"></div>
<div style="left:271px;top:723px;width:1028px;height:1px;background:#a6a7a4"></div>
<div style="left:420px;top:708px;width:1px;height:16px;background:#a6a7a4"></div>
<div style="left:670px;top:708px;width:1px;height:16px;background:#a6a7a4"></div>
<div class="t" style="left:272px;top:705px;font-size:11.8px;font-weight:400;color:#000;letter-spacing:0.35px">25.02.2008</div>
<div class="t" style="left:422px;top:705px;font-size:11.8px;font-weight:400;color:#000;letter-spacing:0.35px">Шамиль</div>
<div class="t" style="left:672px;top:705px;font-size:11.8px;font-weight:400;color:#000;letter-spacing:0.35px">100.00</div>
<div style="left:0px;top:850px;width:1316px;height:2px;background:#dcdddb"></div>
<div style="left:0px;top:852px;width:1317px;height:1px;background:#6e6f6c"></div>
<div style="left:0px;top:871px;width:1317px;height:4px;background:#dcdddb"></div>
<div style="left:-8px;top:853px;width:180px;height:17px;background:#9c9d9a"></div>
<div style="left:-8px;top:853px;width:1px;height:17px;background:#ffffff"></div>
<div style="left:171px;top:853px;width:1px;height:17px;background:#6e6f6c"></div>
<div style="left:-2px;top:858px;width:15px;height:15px;border:1px solid #ffffff;box-sizing:border-box"></div>
<div style="left:-3px;top:857px;width:15px;height:15px;border:1px solid #6e6f6c;box-sizing:border-box"></div>
<svg width="10" height="9" style="left:0px;top:861px"><path d="M1 1 L8.5 8 M8.5 1 L1 8" stroke="#000" stroke-width="2.2"/></svg>
<div class="t" style="left:17px;top:852px;font-size:12.5px;font-weight:700;color:#000;letter-spacing:0.2px">Планировщик заданий</div>
<div style="left:172px;top:853px;width:146px;height:17px;background:#9c9d9a"></div>
<div style="left:172px;top:853px;width:1px;height:17px;background:#ffffff"></div>
<div style="left:317px;top:853px;width:1px;height:17px;background:#6e6f6c"></div>
<div style="left:178px;top:858px;width:15px;height:15px;border:1px solid #ffffff;box-sizing:border-box"></div>
<div style="left:177px;top:857px;width:15px;height:15px;border:1px solid #6e6f6c;box-sizing:border-box"></div>
<svg width="10" height="9" style="left:180px;top:861px"><path d="M1 1 L8.5 8 M8.5 1 L1 8" stroke="#000" stroke-width="2.2"/></svg>
<div class="t" style="left:197px;top:852px;font-size:12.5px;font-weight:700;color:#000;letter-spacing:0.2px">Поиск договоров</div>
<div style="left:318px;top:853px;width:75px;height:17px;background:#9c9d9a"></div>
<div style="left:318px;top:853px;width:1px;height:17px;background:#ffffff"></div>
<div style="left:392px;top:853px;width:1px;height:17px;background:#6e6f6c"></div>
<div style="left:324px;top:858px;width:15px;height:15px;border:1px solid #ffffff;box-sizing:border-box"></div>
<div style="left:323px;top:857px;width:15px;height:15px;border:1px solid #6e6f6c;box-sizing:border-box"></div>
<svg width="10" height="9" style="left:326px;top:861px"><path d="M1 1 L8.5 8 M8.5 1 L1 8" stroke="#000" stroke-width="2.2"/></svg>
<div class="t" style="left:343px;top:852px;font-size:12.5px;font-weight:700;color:#000;letter-spacing:1.2px">x0000</div>
<div style="left:393px;top:853px;width:93px;height:17px;background:#9c9d9a"></div>
<div style="left:393px;top:853px;width:1px;height:17px;background:#ffffff"></div>
<div style="left:485px;top:853px;width:1px;height:17px;background:#6e6f6c"></div>
<div style="left:399px;top:858px;width:15px;height:15px;border:1px solid #ffffff;box-sizing:border-box"></div>
<div style="left:398px;top:857px;width:15px;height:15px;border:1px solid #6e6f6c;box-sizing:border-box"></div>
<svg width="10" height="9" style="left:401px;top:861px"><path d="M1 1 L8.5 8 M8.5 1 L1 8" stroke="#000" stroke-width="2.2"/></svg>
<div class="t" style="left:418px;top:852px;font-size:12.5px;font-weight:700;color:#000;letter-spacing:1.2px">K000001</div>
<div style="left:486px;top:853px;width:93px;height:17px;background:#9c9d9a"></div>
<div style="left:486px;top:853px;width:1px;height:17px;background:#ffffff"></div>
<div style="left:578px;top:853px;width:1px;height:17px;background:#6e6f6c"></div>
<div style="left:492px;top:858px;width:15px;height:15px;border:1px solid #ffffff;box-sizing:border-box"></div>
<div style="left:491px;top:857px;width:15px;height:15px;border:1px solid #6e6f6c;box-sizing:border-box"></div>
<svg width="10" height="9" style="left:494px;top:861px"><path d="M1 1 L8.5 8 M8.5 1 L1 8" stroke="#000" stroke-width="2.2"/></svg>
<div class="t" style="left:511px;top:852px;font-size:12.5px;font-weight:700;color:#000;letter-spacing:1.2px">K000001</div>
<div style="left:579px;top:853px;width:117px;height:17px;background:#9c9d9a"></div>
<div style="left:579px;top:853px;width:1px;height:17px;background:#ffffff"></div>
<div style="left:695px;top:853px;width:1px;height:17px;background:#6e6f6c"></div>
<div style="left:585px;top:858px;width:15px;height:15px;border:1px solid #ffffff;box-sizing:border-box"></div>
<div style="left:584px;top:857px;width:15px;height:15px;border:1px solid #6e6f6c;box-sizing:border-box"></div>
<svg width="10" height="9" style="left:587px;top:861px"><path d="M1 1 L8.5 8 M8.5 1 L1 8" stroke="#000" stroke-width="2.2"/></svg>
<div class="t" style="left:604px;top:852px;font-size:12.5px;font-weight:700;color:#000;letter-spacing:1.2px">K000010-08</div>
<div style="left:696px;top:853px;width:140px;height:17px;background:#9c9d9a"></div>
<div style="left:696px;top:853px;width:1px;height:17px;background:#ffffff"></div>
<div style="left:835px;top:853px;width:1px;height:17px;background:#6e6f6c"></div>
<div style="left:702px;top:858px;width:15px;height:15px;border:1px solid #ffffff;box-sizing:border-box"></div>
<div style="left:701px;top:857px;width:15px;height:15px;border:1px solid #6e6f6c;box-sizing:border-box"></div>
<svg width="10" height="9" style="left:704px;top:861px"><path d="M1 1 L8.5 8 M8.5 1 L1 8" stroke="#000" stroke-width="2.2"/></svg>
<div class="t" style="left:721px;top:852px;font-size:12.5px;font-weight:700;color:#000;letter-spacing:1.2px">K03-000010-08</div>
<div style="left:0px;top:870px;width:836px;height:1px;background:#6e6f6c"></div>
<div style="left:836px;top:850px;width:120px;height:22px;background:#cacdc8"></div>
<div style="left:836px;top:852px;width:1px;height:20px;background:#ffffff"></div>
<svg width="6" height="6" style="left:950px;top:867px"><path d="M5.5 0 V2 L2 5.5 H0" fill="none" stroke="#6e6f6c" stroke-width="1.3"/></svg>
<div style="left:955px;top:852px;width:1px;height:17px;background:#6e6f6c"></div>
<div style="left:837px;top:872px;width:115px;height:1px;background:#6e6f6c"></div>
<div style="left:841px;top:856px;width:15px;height:15px;border:1px solid #ffffff;box-sizing:border-box"></div>
<div style="left:840px;top:855px;width:15px;height:15px;border:1px solid #6e6f6c;box-sizing:border-box"></div>
<svg width="10" height="9" style="left:843px;top:859px"><path d="M1 1 L8.5 8 M8.5 1 L1 8" stroke="#000" stroke-width="2.2"/></svg>
<div class="t" style="left:861px;top:854px;font-size:12.5px;font-weight:700;color:#000;letter-spacing:1.1px">NK00001-03</div>
<div style="left:0px;top:875px;width:1321px;height:3px;background:#5f8ab5"></div>
<div style="left:0px;top:878px;width:1321px;height:1px;background:#2e4157"></div>
<div style="left:1317px;top:0px;width:3px;height:879px;background:#5f8ab5"></div>
<div style="left:1320px;top:0px;width:1px;height:879px;background:#2e4157"></div>
</div></body></html>
